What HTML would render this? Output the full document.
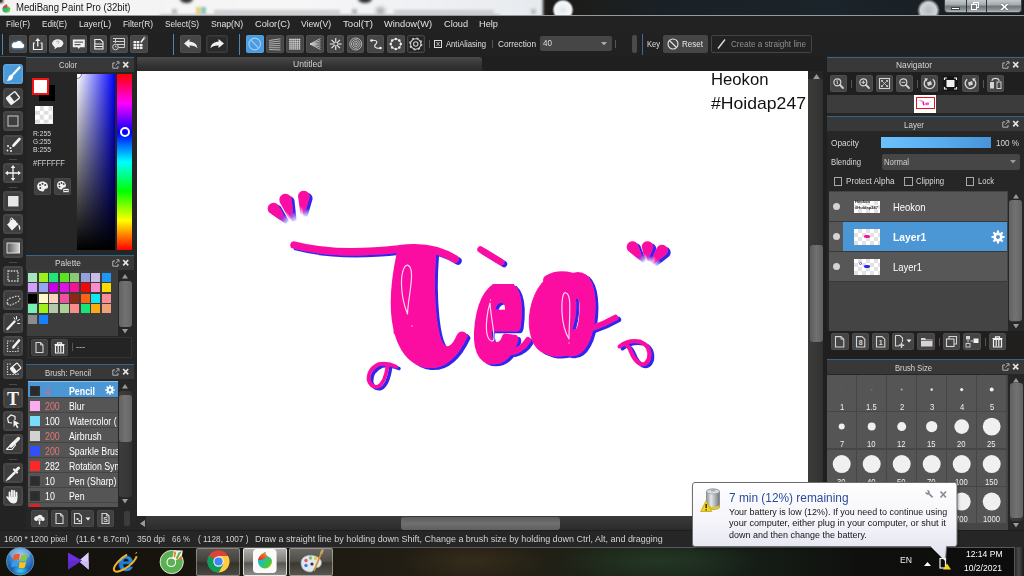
<!DOCTYPE html>
<html lang="en">
<head>
<meta charset="utf-8">
<title>MediBang Paint Pro (32bit)</title>
<style>
html,body{margin:0;padding:0;}
body{width:1024px;height:576px;overflow:hidden;background:#242424;font-family:"Liberation Sans",sans-serif;font-size:9.5px;color:#d8d8d8;position:relative;}
.r{position:absolute;box-sizing:border-box;}
.t{position:absolute;white-space:nowrap;transform-origin:0 0;line-height:1.15;display:block;}
svg{position:absolute;overflow:visible;}
.btn{position:absolute;box-sizing:border-box;background:#464646;border-radius:2px;box-shadow:inset 0 0 0 1px rgba(255,255,255,.05);}
</style>
</head>
<body>
<div class="r" id="titlebar" style="left:0;top:0;width:1024px;height:16px;background:#1a2227;overflow:hidden;">
<div class="r" style="left:540px;top:0px;width:484px;height:16px;background:linear-gradient(90deg,#1e1b19 0,#1d1c1b 8%,#1a2126 25%,#1b242a 60%,#161c21 100%);"></div>
<div class="r" style="left:-5px;top:-3px;width:548px;height:22px;background:linear-gradient(90deg,#f2f2f2 0,#f6f6f6 55%,#eef0f3 80%,#e6eaee 100%);filter:blur(1.500px);"></div>
<div class="r" style="left:552px;top:-1px;width:22px;height:22px;background:radial-gradient(closest-side,#dfe3e6 0,#eef1f3 35%,#f4f6f7 75%,rgba(244,246,247,0) 100%);border-radius:50%;"></div>
<div class="r" style="left:917px;top:-1.5px;width:23px;height:23px;background:radial-gradient(closest-side,#b4babd 0,#c4cacd 40%,#cfd4d7 70%,rgba(190,198,202,0) 100%);border-radius:50%;"></div>
<div class="r" style="left:196px;top:7px;width:5px;height:7px;background:#e6d27a;filter:blur(1.300px);"></div>
<div class="r" style="left:201px;top:7px;width:5px;height:7px;background:#8ec6c0;filter:blur(1.300px);"></div>
<div class="r" style="left:214px;top:9.5px;width:126px;height:4px;background:#c4c4ca;filter:blur(1.600px);opacity:.85;"></div>
<div class="r" style="left:172px;top:9px;width:5px;height:5px;background:#b8b8be;filter:blur(1.500px);"></div>
<div class="r" style="left:352px;top:9px;width:5px;height:5px;background:#b0b0b6;filter:blur(1.500px);"></div>
<div class="r" style="left:376px;top:7px;width:9px;height:8px;background:#a8a8ae;filter:blur(2px);border-radius:50%;"></div>
<div class="r" style="left:394px;top:9.5px;width:100px;height:4px;background:#c4c4ca;filter:blur(1.600px);opacity:.85;"></div>
<div class="r" style="left:531px;top:9px;width:5px;height:5px;background:#b8b8be;filter:blur(1.500px);"></div>
<div class="r" style="left:180px;top:-5px;width:13px;height:8px;background:#2e2e2e;filter:blur(1.500px);border-radius:50%;"></div>
<div class="r" style="left:358px;top:-5px;width:14px;height:8px;background:#2e2e2e;filter:blur(1.500px);border-radius:50%;"></div>
<div class="r" style="left:160px;top:14px;width:340px;height:2px;background:#b0b0b4;filter:blur(.8px);opacity:.7;"></div>
<div class="r" style="left:-2px;top:-2px;width:5px;height:5px;background:#2a2a2a;filter:blur(1px);"></div>
<svg style="left:2px;top:3.500px" width="9" height="9" viewBox="0 0 9 9"><defs><linearGradient id="ai" x1="0" y1="0" x2="1" y2="1"><stop offset="0" stop-color="#18b0c8"/><stop offset=".6" stop-color="#28c060"/><stop offset="1" stop-color="#b8e030"/></linearGradient></defs><path d="M4.800 .300C2.500 1.200 .400 3 .400 5.200a4 3.600 0 0 0 8 0C8.400 3.400 7 2.600 5.600 2C5 1.500 4.800 .900 4.800 .300z" fill="url(#ai)"/><path d="M4.800 .300C2.800 1.200 .800 2.600 .500 4.400C2.200 4.600 4.600 3.800 5.800 2.200C5.100 1.600 4.800 1 4.800 .300z" fill="#e83a48"/><path d="M5.600 2C6.600 2.400 7.600 3 8.100 4C7.200 3.800 6 3.200 5.200 2.800z" fill="#f0d040"/></svg>
<span class="t" style="left:16.4px;top:1.9px;font-size:10px;color:#151515;transform:scaleX(0.954);">MediBang Paint Pro (32bit)</span>
<div class="r" style="left:944px;top:0px;width:78px;height:13px;background:linear-gradient(180deg,#c4c9cc 0,#a4aaad 40%,#6e7578 52%,#8a9194 80%,#b4b9bc 100%);border:1px solid #3a3f41;border-top:none;border-radius:0 0 4px 4px;"></div>
<div class="r" style="left:966px;top:0px;width:1px;height:13px;background:#2e3335;"></div>
<div class="r" style="left:986px;top:0px;width:1px;height:13px;background:#2e3335;"></div>
<div class="r" style="left:951px;top:6.5px;width:9px;height:3px;background:#fff;border:1px solid #444;"></div>
<div class="r" style="left:973px;top:2px;width:6px;height:6px;background:transparent;border:1.5px solid #fff;"></div>
<div class="r" style="left:971px;top:4px;width:6px;height:6px;background:#777;border:1.5px solid #fff;"></div>
<span class="t" style="left:999.5px;top:-0.5px;font-size:11.5px;color:#fff;font-weight:bold;transform:scaleX(1.407);text-shadow:0 0 1px #222;">x</span>
</div>
<div class="r" style="left:0px;top:15px;width:1024px;height:1px;background:#9a9a9a;"></div>
<div class="r" style="left:0px;top:16px;width:1024px;height:17px;background:#222;"></div>
<span class="t" style="left:6px;top:18.9px;font-size:9.5px;color:#e2e2e2;transform:scaleX(0.875);">File(F)</span>
<span class="t" style="left:42px;top:18.9px;font-size:9.5px;color:#e2e2e2;transform:scaleX(0.861);">Edit(E)</span>
<span class="t" style="left:79px;top:18.9px;font-size:9.5px;color:#e2e2e2;transform:scaleX(0.905);">Layer(L)</span>
<span class="t" style="left:123px;top:18.9px;font-size:9.5px;color:#e2e2e2;transform:scaleX(0.875);">Filter(R)</span>
<span class="t" style="left:165px;top:18.9px;font-size:9.5px;color:#e2e2e2;transform:scaleX(0.870);">Select(S)</span>
<span class="t" style="left:211px;top:18.9px;font-size:9.5px;color:#e2e2e2;transform:scaleX(0.905);">Snap(N)</span>
<span class="t" style="left:255px;top:18.9px;font-size:9.5px;color:#e2e2e2;transform:scaleX(0.975);">Color(C)</span>
<span class="t" style="left:301px;top:18.9px;font-size:9.5px;color:#e2e2e2;transform:scaleX(0.907);">View(V)</span>
<span class="t" style="left:343px;top:18.9px;font-size:9.5px;color:#e2e2e2;transform:scaleX(1.015);">Tool(T)</span>
<span class="t" style="left:384px;top:18.9px;font-size:9.5px;color:#e2e2e2;transform:scaleX(0.978);">Window(W)</span>
<span class="t" style="left:444px;top:18.9px;font-size:9.5px;color:#e2e2e2;transform:scaleX(0.967);">Cloud</span>
<span class="t" style="left:479px;top:18.9px;font-size:9.5px;color:#e2e2e2;transform:scaleX(0.972);">Help</span>
<div class="r" style="left:0px;top:33px;width:1024px;height:23px;background:#212121;"></div>
<div class="r" style="left:2px;top:34px;width:1px;height:21px;background:#4a87b5;"></div>
<div class="btn" style="left:9px;top:35px;width:17.5px;height:18px;"></div>
<div class="btn" style="left:29.2px;top:35px;width:17.5px;height:18px;"></div>
<div class="btn" style="left:49.4px;top:35px;width:17.5px;height:18px;"></div>
<div class="btn" style="left:69.6px;top:35px;width:17.5px;height:18px;"></div>
<div class="btn" style="left:89.8px;top:35px;width:17.5px;height:18px;"></div>
<div class="btn" style="left:110px;top:35px;width:17.5px;height:18px;"></div>
<div class="btn" style="left:130.2px;top:35px;width:17.5px;height:18px;"></div>
<div class="r" style="left:173px;top:34px;width:1px;height:21px;background:#4a87b5;"></div>
<div class="btn" style="left:180px;top:35px;width:21px;height:18px;"></div>
<div class="btn" style="left:206px;top:35px;width:22px;height:18px;background:#2a2a2a;border:1px solid #3a3a3a"></div>
<div class="r" style="left:239px;top:34px;width:1px;height:21px;background:#4a87b5;"></div>
<div class="btn" style="left:246px;top:35px;width:17.5px;height:18px;background:#4a9be0;"></div>
<div class="btn" style="left:266.15px;top:35px;width:17.5px;height:18px;background:#464646;"></div>
<div class="btn" style="left:286.3px;top:35px;width:17.5px;height:18px;background:#464646;"></div>
<div class="btn" style="left:306.45px;top:35px;width:17.5px;height:18px;background:#464646;"></div>
<div class="btn" style="left:326.6px;top:35px;width:17.5px;height:18px;background:#464646;"></div>
<div class="btn" style="left:346.75px;top:35px;width:17.5px;height:18px;background:#464646;"></div>
<div class="btn" style="left:366.9px;top:35px;width:17.5px;height:18px;background:#464646;"></div>
<div class="btn" style="left:387.05px;top:35px;width:17.5px;height:18px;background:#464646;"></div>
<div class="btn" style="left:407.2px;top:35px;width:17.5px;height:18px;background:#242424;border:1px solid #444;"></div>
<div class="r" style="left:429px;top:40px;width:1px;height:8px;background:#555;"></div>
<div class="r" style="left:434px;top:40px;width:8px;height:8px;background:transparent;border:1px solid #ddd;"></div>
<span class="t" style="left:436px;top:38.6px;font-size:8px;color:#ddd;transform:scaleX(1.000);">x</span>
<span class="t" style="left:446px;top:38.5px;font-size:9.5px;color:#e0e0e0;transform:scaleX(0.806);">AntiAliasing</span>
<div class="r" style="left:492px;top:40px;width:1px;height:8px;background:#555;"></div>
<span class="t" style="left:498px;top:38.5px;font-size:9.5px;color:#e0e0e0;transform:scaleX(0.867);">Correction</span>
<div class="r" style="left:540px;top:36px;width:72px;height:15px;background:#464646;border-radius:2px;"></div>
<span class="t" style="left:543px;top:39px;font-size:8.5px;color:#ddd;transform:scaleX(0.952);">40</span>
<svg style="left:601px;top:42px" width="6" height="4"><path d="M0 0h6l-3 3.5z" fill="#aaa"/></svg>
<div class="r" style="left:615px;top:40px;width:1px;height:8px;background:#555;"></div>
<div class="r" style="left:632px;top:35px;width:5px;height:18px;background:#4a4a4a;border-radius:2px;"></div>
<div class="r" style="left:642px;top:34px;width:1px;height:21px;background:#3f6f95;"></div>
<span class="t" style="left:647px;top:38.5px;font-size:9.5px;color:#e0e0e0;transform:scaleX(0.794);">Key</span>
<div class="r" style="left:663px;top:35px;width:45px;height:18px;background:#464646;border-radius:2px;"></div>
<svg style="left:667px;top:38px" width="12" height="12" viewBox="0 0 12 12"><circle cx="6" cy="6" r="5" fill="none" stroke="#e8e8e8" stroke-width="1.1"/><path d="M2.5 2.5l7 7" stroke="#e8e8e8" stroke-width="1.1"/></svg>
<span class="t" style="left:682px;top:38.5px;font-size:9.5px;color:#e8e8e8;transform:scaleX(0.846);">Reset</span>
<div class="r" style="left:711px;top:35px;width:101px;height:18px;background:#222;border:1px solid #444;border-radius:2px;"></div>
<svg style="left:717px;top:38px" width="10" height="12" viewBox="0 0 10 12"><path d="M1 10.5L8 1.5" stroke="#ddd" stroke-width="1.4"/></svg>
<span class="t" style="left:731px;top:38.5px;font-size:9.5px;color:#8e8e8e;transform:scaleX(0.856);">Create a straight line</span>
<div class="r" style="left:0px;top:56px;width:26px;height:474px;background:#232323;"></div>
<div class="r" style="left:0px;top:56px;width:26px;height:1px;background:#2d4a60;"></div>
<div class="r" style="left:9px;top:159px;width:8px;height:1px;background:#4a4a4a;"></div>
<div class="r" style="left:9px;top:187px;width:8px;height:1px;background:#4a4a4a;"></div>
<div class="r" style="left:9px;top:262px;width:8px;height:1px;background:#4a4a4a;"></div>
<div class="r" style="left:9px;top:384px;width:8px;height:1px;background:#4a4a4a;"></div>
<div class="r" style="left:9px;top:459px;width:8px;height:1px;background:#4a4a4a;"></div>
<div class="btn" id="tool-brush" style="left:3px;top:64px;width:20px;height:20px;background:#4a9ad9;border-radius:2.5px;border:1px solid #5aa6e2;"></div>
<div class="btn" id="tool-eraser" style="left:3px;top:88px;width:20px;height:20px;background:#3e3e3e;border-radius:2.5px;border:1px solid #484848;"></div>
<div class="btn" id="tool-rect" style="left:3px;top:111px;width:20px;height:20px;background:#3e3e3e;border-radius:2.5px;border:1px solid #484848;"></div>
<div class="btn" id="tool-dotpen" style="left:3px;top:135px;width:20px;height:20px;background:#3e3e3e;border-radius:2.5px;border:1px solid #484848;"></div>
<div class="btn" id="tool-move" style="left:3px;top:163px;width:20px;height:20px;background:#3e3e3e;border-radius:2.5px;border:1px solid #484848;"></div>
<div class="btn" id="tool-fill" style="left:3px;top:191px;width:20px;height:20px;background:#3e3e3e;border-radius:2.5px;border:1px solid #484848;"></div>
<div class="btn" id="tool-bucket" style="left:3px;top:214px;width:20px;height:20px;background:#3e3e3e;border-radius:2.5px;border:1px solid #484848;"></div>
<div class="btn" id="tool-grad" style="left:3px;top:238px;width:20px;height:20px;background:#3e3e3e;border-radius:2.5px;border:1px solid #484848;"></div>
<div class="btn" id="tool-select" style="left:3px;top:266px;width:20px;height:20px;background:#3e3e3e;border-radius:2.5px;border:1px solid #484848;"></div>
<div class="btn" id="tool-lasso" style="left:3px;top:290px;width:20px;height:20px;background:#3e3e3e;border-radius:2.5px;border:1px solid #484848;"></div>
<div class="btn" id="tool-wand" style="left:3px;top:313px;width:20px;height:20px;background:#3e3e3e;border-radius:2.5px;border:1px solid #484848;"></div>
<div class="btn" id="tool-selpen" style="left:3px;top:336px;width:20px;height:20px;background:#3e3e3e;border-radius:2.5px;border:1px solid #484848;"></div>
<div class="btn" id="tool-selerase" style="left:3px;top:359px;width:20px;height:20px;background:#3e3e3e;border-radius:2.5px;border:1px solid #484848;"></div>
<div class="btn" id="tool-text" style="left:3px;top:388px;width:20px;height:20px;background:#3e3e3e;border-radius:2.5px;border:1px solid #484848;"></div>
<div class="btn" id="tool-op" style="left:3px;top:411px;width:20px;height:20px;background:#3e3e3e;border-radius:2.5px;border:1px solid #484848;"></div>
<div class="btn" id="tool-knife" style="left:3px;top:434px;width:20px;height:20px;background:#3e3e3e;border-radius:2.5px;border:1px solid #484848;"></div>
<div class="btn" id="tool-eyedrop" style="left:3px;top:463px;width:20px;height:20px;background:#3e3e3e;border-radius:2.5px;border:1px solid #484848;"></div>
<div class="btn" id="tool-hand" style="left:3px;top:486px;width:20px;height:20px;background:#3e3e3e;border-radius:2.5px;border:1px solid #484848;"></div>
<div class="r" style="left:26px;top:56px;width:110px;height:200px;background:#262626;"></div>
<div class="r" style="left:26px;top:56.5px;width:108px;height:15px;background:#383838;border-top:1px solid #36658c;"></div>
<span class="t" style="left:59px;top:60.1px;font-size:9.5px;color:#d6d6d6;transform:scaleX(0.793);">Color</span>
<svg style="left:111px;top:59.5px" width="18" height="9" viewBox="0 0 18 9"><path d="M4 3H1.800v5.200h5.200V6" fill="none" stroke="#b4b4b4" stroke-width="1"/><path d="M4.500 5.500L7.500 2.200M5.500 1.700h2.500v2.500" fill="none" stroke="#b4b4b4" stroke-width=".9"/><path d="M12.2 2l5 5.4M17.2 2l-5 5.4" stroke="#e4e4e4" stroke-width="1.7"/></svg>
<div class="r" style="left:39px;top:85px;width:16px;height:15.5px;background:#000;"></div>
<div class="r" style="left:32px;top:78px;width:16.5px;height:16.5px;background:#fff;border:2px solid #f01414;"></div>
<div class="r" style="left:35px;top:106px;width:17.5px;height:17.5px;background:#fff;background-image:conic-gradient(#dedede 25%,#fff 0 50%,#dedede 0 75%,#fff 0);background-size:8.75px 8.75px;"></div>
<span class="t" style="left:32.5px;top:128.7px;font-size:8px;color:#d8d8d8;transform:scaleX(0.843);">R:255</span>
<span class="t" style="left:32.5px;top:137.2px;font-size:8px;color:#d8d8d8;transform:scaleX(0.826);">G:255</span>
<span class="t" style="left:32.5px;top:145.4px;font-size:8px;color:#d8d8d8;transform:scaleX(0.861);">B:255</span>
<span class="t" style="left:32.5px;top:159.3px;font-size:8.5px;color:#d0d0d0;transform:scaleX(0.892);">#FFFFFF</span>
<div class="btn" style="left:34px;top:178px;width:17px;height:17px;background:#404040"></div>
<div class="btn" style="left:54px;top:178px;width:17px;height:17px;background:#404040"></div>
<div class="r" style="left:77px;top:73.500px;width:37.500px;height:176.500px;overflow:hidden;background:linear-gradient(180deg,rgba(0,0,0,0),#000),linear-gradient(90deg,#fff,#0000ff);"><div class="r" style="left:-5px;top:-5px;width:10px;height:10px;border-radius:50%;background:#fff;border:1px solid #777;"></div></div>
<div class="r" style="left:117px;top:73.5px;width:15px;height:176.5px;background:#f00;background:linear-gradient(180deg,#ff0000 0,#ff00ff 16.6%,#0000ff 33.3%,#00ffff 50%,#00ff00 66.6%,#ffff00 83.3%,#ff0000 100%);"></div>
<div class="r" style="left:119.5px;top:127px;width:10px;height:10px;background:transparent;border:2px solid #fff;border-radius:50%;"></div>
<div class="r" style="left:26px;top:254px;width:110px;height:110px;background:#262626;"></div>
<div class="r" style="left:26px;top:254.5px;width:108px;height:15px;background:#383838;border-top:1px solid #36658c;"></div>
<span class="t" style="left:55px;top:258.1px;font-size:9.5px;color:#d6d6d6;transform:scaleX(0.879);">Palette</span>
<svg style="left:111px;top:257.5px" width="18" height="9" viewBox="0 0 18 9"><path d="M4 3H1.800v5.200h5.200V6" fill="none" stroke="#b4b4b4" stroke-width="1"/><path d="M4.500 5.500L7.500 2.200M5.500 1.700h2.500v2.500" fill="none" stroke="#b4b4b4" stroke-width=".9"/><path d="M12.2 2l5 5.4M17.2 2l-5 5.4" stroke="#e4e4e4" stroke-width="1.7"/></svg>
<div class="r" style="left:27px;top:270px;width:91px;height:66px;background:#3d3d3d;"></div>
<div class="r" style="left:28.2px;top:272.8px;width:9.2px;height:9.2px;background:#a8e6c0;"></div>
<div class="r" style="left:38.7px;top:272.8px;width:9.2px;height:9.2px;background:#9cf01e;"></div>
<div class="r" style="left:49.2px;top:272.8px;width:9.2px;height:9.2px;background:#1ee678;"></div>
<div class="r" style="left:59.7px;top:272.8px;width:9.2px;height:9.2px;background:#5ae61e;"></div>
<div class="r" style="left:70.2px;top:272.8px;width:9.2px;height:9.2px;background:#8cc878;"></div>
<div class="r" style="left:80.7px;top:272.8px;width:9.2px;height:9.2px;background:#96a0dc;"></div>
<div class="r" style="left:91.2px;top:272.8px;width:9.2px;height:9.2px;background:#c8bee6;"></div>
<div class="r" style="left:101.7px;top:272.8px;width:9.2px;height:9.2px;background:#1e96fa;"></div>
<div class="r" style="left:28.2px;top:283.3px;width:9.2px;height:9.2px;background:#d2a0fa;"></div>
<div class="r" style="left:38.7px;top:283.3px;width:9.2px;height:9.2px;background:#96a5f0;"></div>
<div class="r" style="left:49.2px;top:283.3px;width:9.2px;height:9.2px;background:#c800e6;"></div>
<div class="r" style="left:59.7px;top:283.3px;width:9.2px;height:9.2px;background:#dc14e6;"></div>
<div class="r" style="left:70.2px;top:283.3px;width:9.2px;height:9.2px;background:#f01496;"></div>
<div class="r" style="left:80.7px;top:283.3px;width:9.2px;height:9.2px;background:#f00a0a;"></div>
<div class="r" style="left:91.2px;top:283.3px;width:9.2px;height:9.2px;background:#fa8cc8;"></div>
<div class="r" style="left:101.7px;top:283.3px;width:9.2px;height:9.2px;background:#fadc00;"></div>
<div class="r" style="left:28.2px;top:293.8px;width:9.2px;height:9.2px;background:#000000;"></div>
<div class="r" style="left:38.7px;top:293.8px;width:9.2px;height:9.2px;background:#fffac8;"></div>
<div class="r" style="left:49.2px;top:293.8px;width:9.2px;height:9.2px;background:#fad2be;"></div>
<div class="r" style="left:59.7px;top:293.8px;width:9.2px;height:9.2px;background:#f050a0;"></div>
<div class="r" style="left:70.2px;top:293.8px;width:9.2px;height:9.2px;background:#8c2814;"></div>
<div class="r" style="left:80.7px;top:293.8px;width:9.2px;height:9.2px;background:#fa6414;"></div>
<div class="r" style="left:91.2px;top:293.8px;width:9.2px;height:9.2px;background:#14e6f0;"></div>
<div class="r" style="left:101.7px;top:293.8px;width:9.2px;height:9.2px;background:#fa8c96;"></div>
<div class="r" style="left:28.2px;top:304.3px;width:9.2px;height:9.2px;background:#78f0b4;"></div>
<div class="r" style="left:38.7px;top:304.3px;width:9.2px;height:9.2px;background:#a0f01e;"></div>
<div class="r" style="left:49.2px;top:304.3px;width:9.2px;height:9.2px;background:#b4c8aa;"></div>
<div class="r" style="left:59.7px;top:304.3px;width:9.2px;height:9.2px;background:#aad296;"></div>
<div class="r" style="left:70.2px;top:304.3px;width:9.2px;height:9.2px;background:#fa8c8c;"></div>
<div class="r" style="left:80.7px;top:304.3px;width:9.2px;height:9.2px;background:#14e678;"></div>
<div class="r" style="left:91.2px;top:304.3px;width:9.2px;height:9.2px;background:#faaa14;"></div>
<div class="r" style="left:101.7px;top:304.3px;width:9.2px;height:9.2px;background:#f0a078;"></div>
<div class="r" style="left:28.2px;top:314.8px;width:9.2px;height:9.2px;background:#8c8c8c;"></div>
<div class="r" style="left:38.7px;top:314.8px;width:9.2px;height:9.2px;background:#1482fa;"></div>
<div class="r" style="left:118px;top:271px;width:14px;height:65px;background:#262626;"></div>
<div class="r" style="left:118.5px;top:280.5px;width:13px;height:46px;background:linear-gradient(90deg,#3c3c3c,#383838 60%,#323232);border-radius:3px;"></div>
<div class="r" style="left:118.5px;top:281px;width:13px;height:46px;background:linear-gradient(90deg,#626262,#727272 50%,#636363);border-radius:3px;"></div>
<svg style="left:122px;top:274px" width="6" height="5"><path d="M3 0l3 4.500h-6z" fill="#9a9a9a"/></svg>
<svg style="left:122px;top:328.5px" width="6" height="5"><path d="M0 0h6l-3 4.500z" fill="#9a9a9a"/></svg>
<div class="r" style="left:28px;top:337px;width:104px;height:21px;background:#242424;border:1px solid #333;"></div>
<div class="btn" style="left:31px;top:339px;width:17px;height:17px;background:#404040"></div>
<div class="btn" style="left:51px;top:339px;width:17px;height:17px;background:#404040"></div>
<div class="r" style="left:72px;top:343px;width:1px;height:8px;background:#555;"></div>
<span class="t" style="left:76px;top:342px;font-size:9px;color:#ccc;transform:scaleX(1.001);">---</span>
<div class="r" style="left:26px;top:363px;width:110px;height:167px;background:#262626;"></div>
<div class="r" style="left:26px;top:364px;width:108px;height:15px;background:#383838;border-top:1px solid #36658c;"></div>
<span class="t" style="left:45px;top:367.6px;font-size:9.5px;color:#d6d6d6;transform:scaleX(0.822);">Brush: Pencil</span>
<svg style="left:111px;top:367px" width="18" height="9" viewBox="0 0 18 9"><path d="M4 3H1.800v5.200h5.200V6" fill="none" stroke="#b4b4b4" stroke-width="1"/><path d="M4.500 5.500L7.500 2.200M5.500 1.700h2.500v2.500" fill="none" stroke="#b4b4b4" stroke-width=".9"/><path d="M12.2 2l5 5.4M17.2 2l-5 5.4" stroke="#e4e4e4" stroke-width="1.7"/></svg>
<div class="r" style="left:28px;top:381px;width:89.5px;height:125.6px;background:#555;overflow:hidden;"></div>
<div class="r" style="left:28px;top:381px;width:89.5px;height:125.600px;overflow:hidden;">
<div class="r" style="left:0px;top:0px;width:90px;height:17px;background:#4b96d4;border-bottom:1px solid #444;border-top:1px solid #8cc0ea;"></div>
<div class="r" style="left:2px;top:4.75px;width:10px;height:10px;background:#2a2a2a;border:1px solid #333;"></div>
<span class="t" style="left:16.5px;top:4.55px;font-size:10px;color:#e8657a;transform:scaleX(0.880);">4</span>
<span class="t" style="left:40.5px;top:4.55px;font-size:10px;color:#fff;font-weight:bold;transform:scaleX(0.880);">Pencil</span>
<div class="r" style="left:0px;top:17px;width:90px;height:15px;background:#555;border-bottom:1px solid #444;"></div>
<div class="r" style="left:2px;top:19.75px;width:10px;height:10px;background:#ffaaee;"></div>
<span class="t" style="left:16.5px;top:19.55px;font-size:10px;color:#e07878;transform:scaleX(0.880);">200</span>
<span class="t" style="left:40.5px;top:19.55px;font-size:10px;color:#fff;transform:scaleX(0.880);">Blur</span>
<div class="r" style="left:0px;top:32px;width:90px;height:15px;background:#555;border-bottom:1px solid #444;"></div>
<div class="r" style="left:2px;top:34.75px;width:10px;height:10px;background:#78dcfa;"></div>
<span class="t" style="left:16.5px;top:34.55px;font-size:10px;color:#fff;transform:scaleX(0.880);">100</span>
<span class="t" style="left:40.5px;top:34.55px;font-size:10px;color:#fff;transform:scaleX(0.880);">Watercolor (</span>
<div class="r" style="left:0px;top:47px;width:90px;height:15px;background:#555;border-bottom:1px solid #444;"></div>
<div class="r" style="left:2px;top:49.75px;width:10px;height:10px;background:#d2d2d2;"></div>
<span class="t" style="left:16.5px;top:49.55px;font-size:10px;color:#e07878;transform:scaleX(0.880);">200</span>
<span class="t" style="left:40.5px;top:49.55px;font-size:10px;color:#fff;transform:scaleX(0.880);">Airbrush</span>
<div class="r" style="left:0px;top:62px;width:90px;height:15px;background:#555;border-bottom:1px solid #444;"></div>
<div class="r" style="left:2px;top:64.75px;width:10px;height:10px;background:#3250fa;"></div>
<span class="t" style="left:16.5px;top:64.55px;font-size:10px;color:#e07878;transform:scaleX(0.880);">200</span>
<span class="t" style="left:40.5px;top:64.55px;font-size:10px;color:#fff;transform:scaleX(0.880);">Sparkle Brush</span>
<div class="r" style="left:0px;top:77px;width:90px;height:15px;background:#555;border-bottom:1px solid #444;"></div>
<div class="r" style="left:2px;top:79.75px;width:10px;height:10px;background:#fa2828;"></div>
<span class="t" style="left:16.5px;top:79.55px;font-size:10px;color:#fff;transform:scaleX(0.880);">282</span>
<span class="t" style="left:40.5px;top:79.55px;font-size:10px;color:#fff;transform:scaleX(0.880);">Rotation Symmetry</span>
<div class="r" style="left:0px;top:92px;width:90px;height:15px;background:#555;border-bottom:1px solid #444;"></div>
<div class="r" style="left:2px;top:94.75px;width:10px;height:10px;background:#2d2d2d;border:1px solid #333;"></div>
<span class="t" style="left:16.5px;top:94.55px;font-size:10px;color:#fff;transform:scaleX(0.880);">10</span>
<span class="t" style="left:40.5px;top:94.55px;font-size:10px;color:#fff;transform:scaleX(0.880);">Pen (Sharp)</span>
<div class="r" style="left:0px;top:107px;width:90px;height:15px;background:#555;border-bottom:1px solid #444;"></div>
<div class="r" style="left:2px;top:109.75px;width:10px;height:10px;background:#2d2d2d;border:1px solid #333;"></div>
<span class="t" style="left:16.5px;top:109.55px;font-size:10px;color:#fff;transform:scaleX(0.880);">10</span>
<span class="t" style="left:40.5px;top:109.55px;font-size:10px;color:#fff;transform:scaleX(0.880);">Pen</span>
<div class="r" style="left:0px;top:122px;width:90px;height:15px;background:#555;border-bottom:1px solid #444;"></div>
<div class="r" style="left:2px;top:122.8px;width:10px;height:10px;background:#e02020;"></div>
</div>
<svg style="left:104.5px;top:385px" width="10" height="10" viewBox="0 0 10 10"><path d="M8.31 4.21L9.74 4.25L9.74 5.75L8.31 5.79L7.90 6.78L8.88 7.82L7.82 8.88L6.78 7.90L5.79 8.31L5.75 9.74L4.25 9.74L4.21 8.31L3.22 7.90L2.18 8.88L1.12 7.82L2.10 6.78L1.69 5.79L0.26 5.75L0.26 4.25L1.69 4.21L2.10 3.22L1.12 2.18L2.18 1.12L3.22 2.10L4.21 1.69L4.25 0.26L5.75 0.26L5.79 1.69L6.78 2.10L7.82 1.12L8.88 2.18L7.90 3.22zM3.60 5.00a1.40 1.40 0 1 0 2.80 0a1.40 1.40 0 1 0 -2.80 0z" fill="#fff" fill-rule="evenodd"/></svg>
<div class="r" style="left:118px;top:381px;width:14px;height:125px;background:#262626;"></div>
<div class="r" style="left:118.5px;top:390.5px;width:13px;height:106px;background:linear-gradient(90deg,#3c3c3c,#383838 60%,#323232);border-radius:3px;"></div>
<div class="r" style="left:118.5px;top:395px;width:13px;height:47px;background:linear-gradient(90deg,#626262,#727272 50%,#636363);border-radius:3px;"></div>
<svg style="left:122px;top:384px" width="6" height="5"><path d="M3 0l3 4.500h-6z" fill="#9a9a9a"/></svg>
<svg style="left:122px;top:498.5px" width="6" height="5"><path d="M0 0h6l-3 4.500z" fill="#9a9a9a"/></svg>
<div class="btn" style="left:31px;top:509.5px;width:17px;height:17px;background:#404040"></div>
<div class="btn" style="left:51px;top:509.5px;width:17px;height:17px;background:#404040"></div>
<div class="btn" style="left:71px;top:509.5px;width:23px;height:17px;background:#404040"></div>
<div class="btn" style="left:97px;top:509.5px;width:17px;height:17px;background:#404040"></div>
<div class="r" style="left:124px;top:511px;width:6px;height:15px;background:#3c3c3c;border-radius:2px;"></div>
<div class="r" style="left:136px;top:56px;width:691px;height:15px;background:#1f1f1f;"></div>
<div class="r" style="left:137px;top:56.5px;width:345px;height:14px;background:linear-gradient(180deg,#4a4a4a 0,#333 60%,#2a2a2a 100%);border-radius:0 3px 0 0;"></div>
<span class="t" style="left:293px;top:59px;font-size:9.5px;color:#d0d0d0;transform:scaleX(0.900);">Untitled</span>
<div class="r" style="left:137px;top:71px;width:671px;height:444.5px;background:#fff;"></div>
<span class="t" style="left:710.5px;top:70.2px;font-size:17px;color:#111;transform:scaleX(0.981);">Heokon</span>
<span class="t" style="left:711px;top:94.2px;font-size:17px;color:#111;transform:scaleX(1.036);">#Hoidap247</span>
<div class="r" style="left:808px;top:71px;width:15.5px;height:445px;background:linear-gradient(90deg,#3b3b3a,#363635 60%,#2f2f2f);"></div>
<div class="r" style="left:808px;top:71px;width:15.5px;height:8px;background:#252525;"></div>
<svg style="left:812.5px;top:73.5px" width="7" height="5"><path d="M3.5 0l3.5 5h-7z" fill="#9a9a9a"/></svg>
<div class="r" style="left:809.5px;top:245px;width:13px;height:97px;background:linear-gradient(90deg,#5c5c5c,#707070 50%,#5f5f5f);border-radius:3px;"></div>
<div class="r" style="left:823px;top:56px;width:4px;height:474px;background:#1f1f1f;"></div>
<div class="r" style="left:137px;top:515.5px;width:686px;height:14.5px;background:linear-gradient(180deg,#3a3a3a,#333 50%,#2b2b2b);"></div>
<div class="r" style="left:137px;top:515.5px;width:8.5px;height:14.5px;background:#262626;"></div>
<svg style="left:139.5px;top:519.5px" width="5" height="7"><path d="M0 3.5l5-3.5v7z" fill="#9a9a9a"/></svg>
<div class="r" style="left:401px;top:516.5px;width:159px;height:13px;background:linear-gradient(180deg,#5c5c5c,#707070 50%,#5f5f5f);border-radius:3px;"></div>
<div class="r" style="left:809px;top:516px;width:18px;height:14px;background:#232323;"></div>
<div class="r" style="left:827px;top:56px;width:197px;height:474px;background:#262626;"></div>
<div class="r" style="left:827px;top:56.5px;width:197px;height:15px;background:#383838;border-top:1px solid #36658c;"></div>
<span class="t" style="left:895.5px;top:60.1px;font-size:9.5px;color:#d6d6d6;transform:scaleX(0.885);">Navigator</span>
<svg style="left:1001px;top:59.5px" width="18" height="9" viewBox="0 0 18 9"><path d="M4 3H1.800v5.200h5.200V6" fill="none" stroke="#b4b4b4" stroke-width="1"/><path d="M4.500 5.500L7.500 2.200M5.500 1.700h2.500v2.500" fill="none" stroke="#b4b4b4" stroke-width=".9"/><path d="M12.2 2l5 5.4M17.2 2l-5 5.4" stroke="#e4e4e4" stroke-width="1.7"/></svg>
<div class="r" style="left:827px;top:72px;width:197px;height:23px;background:#1f1f1f;"></div>
<div class="btn" id="nav0" style="left:830px;top:75px;width:17px;height:17px;background:#454545"></div>
<div class="btn" id="nav1" style="left:855.5px;top:75px;width:17px;height:17px;background:#454545"></div>
<div class="btn" id="nav2" style="left:876px;top:75px;width:17px;height:17px;background:#454545"></div>
<div class="btn" id="nav3" style="left:896px;top:75px;width:17px;height:17px;background:#454545"></div>
<div class="btn" id="nav4" style="left:921px;top:75px;width:17px;height:17px;background:#454545"></div>
<div class="btn" id="nav5" style="left:942px;top:75px;width:17px;height:17px;background:#141414"></div>
<div class="btn" id="nav6" style="left:962px;top:75px;width:17px;height:17px;background:#454545"></div>
<div class="btn" id="nav7" style="left:987px;top:75px;width:17px;height:17px;background:#454545"></div>
<div class="r" style="left:851px;top:80px;width:1px;height:8px;background:#555;"></div>
<div class="r" style="left:917px;top:80px;width:1px;height:8px;background:#555;"></div>
<div class="r" style="left:983px;top:80px;width:1px;height:8px;background:#555;"></div>
<div class="r" style="left:827px;top:94.5px;width:197px;height:18.5px;background:#3c3c3c;"></div>
<div class="r" style="left:914px;top:95px;width:22.2px;height:17.6px;background:#fff;"></div>
<div class="r" style="left:915.5px;top:97px;width:19px;height:12px;background:#fff;border:1.500px solid #e0141e;"></div>
<div class="r" style="left:827px;top:116px;width:197px;height:15px;background:#383838;border-top:1px solid #36658c;"></div>
<span class="t" style="left:903.5px;top:119.6px;font-size:9.5px;color:#d6d6d6;transform:scaleX(0.842);">Layer</span>
<svg style="left:1001px;top:119px" width="18" height="9" viewBox="0 0 18 9"><path d="M4 3H1.800v5.200h5.200V6" fill="none" stroke="#b4b4b4" stroke-width="1"/><path d="M4.500 5.500L7.500 2.200M5.500 1.700h2.500v2.500" fill="none" stroke="#b4b4b4" stroke-width=".9"/><path d="M12.2 2l5 5.4M17.2 2l-5 5.4" stroke="#e4e4e4" stroke-width="1.7"/></svg>
<span class="t" style="left:830.5px;top:138px;font-size:9.5px;color:#d8d8d8;transform:scaleX(0.869);">Opacity</span>
<div class="r" style="left:880.5px;top:137px;width:110px;height:11px;background:linear-gradient(90deg,#6cc0fb 0,#5aaef0 50%,#4794d8 100%);"></div>
<span class="t" style="left:996px;top:138px;font-size:9.5px;color:#d8d8d8;transform:scaleX(0.854);">100 %</span>
<span class="t" style="left:830.5px;top:157px;font-size:9.5px;color:#d8d8d8;transform:scaleX(0.811);">Blending</span>
<div class="r" style="left:881.5px;top:154px;width:138px;height:15.5px;background:#464646;border-radius:2px;"></div>
<span class="t" style="left:884px;top:157.3px;font-size:9.5px;color:#d0d0d0;transform:scaleX(0.817);">Normal</span>
<svg style="left:1009.5px;top:159.5px" width="6" height="4"><path d="M0 0h6l-3 3.5z" fill="#9a9a9a"/></svg>
<div class="r" style="left:833.5px;top:177px;width:8.5px;height:8.5px;background:transparent;border:1px solid #a8a8a8;"></div>
<div class="r" style="left:904px;top:177px;width:8.5px;height:8.5px;background:transparent;border:1px solid #a8a8a8;"></div>
<div class="r" style="left:965.5px;top:177px;width:8.5px;height:8.5px;background:transparent;border:1px solid #a8a8a8;"></div>
<span class="t" style="left:845.5px;top:176px;font-size:9.5px;color:#d8d8d8;transform:scaleX(0.858);">Protect Alpha</span>
<span class="t" style="left:916px;top:176px;font-size:9.5px;color:#d8d8d8;transform:scaleX(0.816);">Clipping</span>
<span class="t" style="left:977.5px;top:176px;font-size:9.5px;color:#d8d8d8;transform:scaleX(0.797);">Lock</span>
<div class="r" style="left:829px;top:191px;width:179px;height:140px;background:#444;"></div>
<div class="r" style="left:829px;top:192px;width:178px;height:30px;background:#383838;"></div>
<div class="r" style="left:829px;top:192px;width:178px;height:29px;background:#575757;"></div>
<div class="r" style="left:832.5px;top:203px;width:7px;height:7px;background:#d4d4d4;border-radius:50%;"></div>
<span class="t" style="left:892.5px;top:200.5px;font-size:10.5px;color:#fff;transform:scaleX(0.900);">Heokon</span>
<div class="r" style="left:829px;top:222px;width:178px;height:30px;background:#383838;"></div>
<div class="r" style="left:829px;top:222px;width:178px;height:29px;background:#575757;"></div>
<div class="r" style="left:843px;top:222px;width:164px;height:29px;background:#4b96d4;"></div>
<div class="r" style="left:832.5px;top:233px;width:7px;height:7px;background:#d4d4d4;border-radius:50%;"></div>
<span class="t" style="left:892.5px;top:230.5px;font-size:10.5px;color:#fff;font-weight:bold;transform:scaleX(0.980);">Layer1</span>
<div class="r" style="left:829px;top:252px;width:178px;height:30px;background:#383838;"></div>
<div class="r" style="left:829px;top:252px;width:178px;height:29px;background:#575757;"></div>
<div class="r" style="left:832.5px;top:263px;width:7px;height:7px;background:#d4d4d4;border-radius:50%;"></div>
<span class="t" style="left:892.5px;top:260.5px;font-size:10.5px;color:#fff;transform:scaleX(0.900);">Layer1</span>
<div class="r" style="left:854px;top:200.5px;width:26px;height:12px;background:#fff;background-color:#fff;background-image:conic-gradient(#e2e2e2 25%,#fff 0 50%,#e2e2e2 0 75%,#fff 0);background-size:8px 8px;"></div>
<span class="t" style="left:855px;top:200px;font-size:4px;color:#222;font-weight:bold;transform:scaleX(1.023);">Heokon</span>
<span class="t" style="left:855px;top:205.5px;font-size:4px;color:#222;font-weight:bold;transform:scaleX(1.024);">#Hoidap247</span>
<div class="r" style="left:854px;top:229px;width:26px;height:15.5px;background:#fff;background-color:#fff;background-image:conic-gradient(#e2e2e2 25%,#fff 0 50%,#e2e2e2 0 75%,#fff 0);background-size:8px 8px;"></div>
<div class="r" style="left:864px;top:235px;width:6px;height:3px;background:#f0149c;border-radius:40%;"></div>
<div class="r" style="left:854px;top:259px;width:26px;height:15.5px;background:#fff;background-color:#fff;background-image:conic-gradient(#e2e2e2 25%,#fff 0 50%,#e2e2e2 0 75%,#fff 0);background-size:8px 8px;"></div>
<div class="r" style="left:864px;top:265px;width:6px;height:3px;background:#2828e8;border-radius:40%;"></div>
<div class="r" style="left:859px;top:262px;width:3px;height:3px;background:transparent;border:0.7px solid #5050e8;border-radius:50%;"></div>
<svg style="left:990.5px;top:229.5px" width="14" height="14" viewBox="0 0 14 14"><path d="M11.57 5.90L13.52 5.97L13.52 8.03L11.57 8.10L11.01 9.46L12.34 10.88L10.88 12.34L9.46 11.01L8.10 11.57L8.03 13.52L5.97 13.52L5.90 11.57L4.54 11.01L3.12 12.34L1.66 10.88L2.99 9.46L2.43 8.10L0.48 8.03L0.48 5.97L2.43 5.90L2.99 4.54L1.66 3.12L3.12 1.66L4.54 2.99L5.90 2.43L5.97 0.48L8.03 0.48L8.10 2.43L9.46 2.99L10.88 1.66L12.34 3.12L11.01 4.54zM5.00 7.00a2.00 2.00 0 1 0 4.00 0a2.00 2.00 0 1 0 -4.00 0z" fill="#fff" fill-rule="evenodd"/></svg>
<div class="r" style="left:1008.5px;top:191px;width:14px;height:140px;background:#262626;"></div>
<div class="r" style="left:1009px;top:200.5px;width:13px;height:121px;background:linear-gradient(90deg,#3c3c3c,#383838 60%,#323232);border-radius:3px;"></div>
<div class="r" style="left:1009px;top:200px;width:13px;height:121px;background:linear-gradient(90deg,#626262,#727272 50%,#636363);border-radius:3px;"></div>
<svg style="left:1012.5px;top:194px" width="6" height="5"><path d="M3 0l3 4.500h-6z" fill="#9a9a9a"/></svg>
<svg style="left:1012.5px;top:323.5px" width="6" height="5"><path d="M0 0h6l-3 4.500z" fill="#9a9a9a"/></svg>
<div class="r" style="left:827px;top:331px;width:197px;height:28px;background:#211f1e;"></div>
<div class="btn" id="lb0" style="left:831px;top:333px;width:17.5px;height:17px;background:#454545"></div>
<div class="btn" id="lb1" style="left:852px;top:333px;width:17px;height:17px;background:#454545"></div>
<div class="btn" id="lb2" style="left:872px;top:333px;width:17px;height:17px;background:#454545"></div>
<div class="btn" id="lb3" style="left:892px;top:333px;width:22px;height:17px;background:#454545"></div>
<div class="btn" id="lb4" style="left:917px;top:333px;width:18px;height:17px;background:#454545"></div>
<div class="btn" id="lb5" style="left:943px;top:333px;width:17px;height:17px;background:#454545"></div>
<div class="btn" id="lb6" style="left:963px;top:333px;width:18px;height:17px;background:#454545"></div>
<div class="btn" id="lb7" style="left:989px;top:333px;width:17px;height:17px;background:#454545"></div>
<div class="r" style="left:939px;top:338px;width:1px;height:8px;background:#555;"></div>
<div class="r" style="left:984.5px;top:338px;width:1px;height:8px;background:#555;"></div>
<div class="r" style="left:827px;top:359px;width:197px;height:15px;background:#383838;border-top:1px solid #36658c;"></div>
<span class="t" style="left:895px;top:362.6px;font-size:9.5px;color:#d6d6d6;transform:scaleX(0.805);">Brush Size</span>
<svg style="left:1001px;top:362px" width="18" height="9" viewBox="0 0 18 9"><path d="M4 3H1.800v5.200h5.200V6" fill="none" stroke="#b4b4b4" stroke-width="1"/><path d="M4.500 5.500L7.500 2.200M5.500 1.700h2.500v2.500" fill="none" stroke="#b4b4b4" stroke-width=".9"/><path d="M12.2 2l5 5.4M17.2 2l-5 5.4" stroke="#e4e4e4" stroke-width="1.7"/></svg>
<div class="r" style="left:827px;top:374.5px;width:181px;height:156px;background:#464646;"></div>
<div class="r" style="left:827px;top:375px;width:29px;height:36px;background:#555;"></div>
<span class="t" style="left:839.573px;top:403.2px;font-size:8.5px;color:#f0f0f0;transform:scaleX(0.900);">1</span>
<div class="r" style="left:857px;top:375px;width:29px;height:36px;background:#555;"></div>
<span class="t" style="left:866.383px;top:403.2px;font-size:8.5px;color:#f0f0f0;transform:scaleX(0.900);">1.5</span>
<div class="r" style="left:887px;top:375px;width:29px;height:36px;background:#555;"></div>
<span class="t" style="left:899.573px;top:403.2px;font-size:8.5px;color:#f0f0f0;transform:scaleX(0.900);">2</span>
<div class="r" style="left:917px;top:375px;width:29px;height:36px;background:#555;"></div>
<span class="t" style="left:929.573px;top:403.2px;font-size:8.5px;color:#f0f0f0;transform:scaleX(0.900);">3</span>
<div class="r" style="left:947px;top:375px;width:29px;height:36px;background:#555;"></div>
<span class="t" style="left:959.573px;top:403.2px;font-size:8.5px;color:#f0f0f0;transform:scaleX(0.900);">4</span>
<div class="r" style="left:977px;top:375px;width:29px;height:36px;background:#555;"></div>
<span class="t" style="left:989.573px;top:403.2px;font-size:8.5px;color:#f0f0f0;transform:scaleX(0.900);">5</span>
<div class="r" style="left:827px;top:412px;width:29px;height:36px;background:#555;"></div>
<span class="t" style="left:839.573px;top:440.2px;font-size:8.5px;color:#f0f0f0;transform:scaleX(0.900);">7</span>
<div class="r" style="left:857px;top:412px;width:29px;height:36px;background:#555;"></div>
<span class="t" style="left:867.445px;top:440.2px;font-size:8.5px;color:#f0f0f0;transform:scaleX(0.900);">10</span>
<div class="r" style="left:887px;top:412px;width:29px;height:36px;background:#555;"></div>
<span class="t" style="left:897.445px;top:440.2px;font-size:8.5px;color:#f0f0f0;transform:scaleX(0.900);">12</span>
<div class="r" style="left:917px;top:412px;width:29px;height:36px;background:#555;"></div>
<span class="t" style="left:927.445px;top:440.2px;font-size:8.5px;color:#f0f0f0;transform:scaleX(0.900);">15</span>
<div class="r" style="left:947px;top:412px;width:29px;height:36px;background:#555;"></div>
<span class="t" style="left:957.445px;top:440.2px;font-size:8.5px;color:#f0f0f0;transform:scaleX(0.900);">20</span>
<div class="r" style="left:977px;top:412px;width:29px;height:36px;background:#555;"></div>
<span class="t" style="left:987.445px;top:440.2px;font-size:8.5px;color:#f0f0f0;transform:scaleX(0.900);">25</span>
<div class="r" style="left:827px;top:449.5px;width:29px;height:36px;background:#555;"></div>
<span class="t" style="left:837.445px;top:477.7px;font-size:8.5px;color:#f0f0f0;transform:scaleX(0.900);">30</span>
<div class="r" style="left:857px;top:449.5px;width:29px;height:36px;background:#555;"></div>
<span class="t" style="left:867.445px;top:477.7px;font-size:8.5px;color:#f0f0f0;transform:scaleX(0.900);">40</span>
<div class="r" style="left:887px;top:449.5px;width:29px;height:36px;background:#555;"></div>
<span class="t" style="left:897.445px;top:477.7px;font-size:8.5px;color:#f0f0f0;transform:scaleX(0.900);">50</span>
<div class="r" style="left:917px;top:449.5px;width:29px;height:36px;background:#555;"></div>
<span class="t" style="left:927.445px;top:477.7px;font-size:8.5px;color:#f0f0f0;transform:scaleX(0.900);">70</span>
<div class="r" style="left:947px;top:449.5px;width:29px;height:36px;background:#555;"></div>
<span class="t" style="left:955.318px;top:477.7px;font-size:8.5px;color:#f0f0f0;transform:scaleX(0.900);">100</span>
<div class="r" style="left:977px;top:449.5px;width:29px;height:36px;background:#555;"></div>
<span class="t" style="left:985.318px;top:477.7px;font-size:8.5px;color:#f0f0f0;transform:scaleX(0.900);">150</span>
<div class="r" style="left:827px;top:487px;width:29px;height:36px;background:#555;"></div>
<span class="t" style="left:835.318px;top:515.2px;font-size:8.5px;color:#f0f0f0;transform:scaleX(0.900);">200</span>
<div class="r" style="left:857px;top:487px;width:29px;height:36px;background:#555;"></div>
<span class="t" style="left:865.318px;top:515.2px;font-size:8.5px;color:#f0f0f0;transform:scaleX(0.900);">300</span>
<div class="r" style="left:887px;top:487px;width:29px;height:36px;background:#555;"></div>
<span class="t" style="left:895.318px;top:515.2px;font-size:8.5px;color:#f0f0f0;transform:scaleX(0.900);">400</span>
<div class="r" style="left:917px;top:487px;width:29px;height:36px;background:#555;"></div>
<span class="t" style="left:925.318px;top:515.2px;font-size:8.5px;color:#f0f0f0;transform:scaleX(0.900);">500</span>
<div class="r" style="left:947px;top:487px;width:29px;height:36px;background:#555;"></div>
<span class="t" style="left:955.318px;top:515.2px;font-size:8.5px;color:#f0f0f0;transform:scaleX(0.900);">700</span>
<div class="r" style="left:977px;top:487px;width:29px;height:36px;background:#555;"></div>
<span class="t" style="left:983.191px;top:515.2px;font-size:8.5px;color:#f0f0f0;transform:scaleX(0.900);">1000</span>
<svg style="left:827px;top:375px" width="181" height="150" viewBox="0 0 181 150"><circle cx="14.7" cy="14.6" r="0.8" fill="#626262"/><circle cx="44.7" cy="14.6" r="0.9" fill="#707070"/><circle cx="74.7" cy="14.6" r="1" fill="#b0b0b0"/><circle cx="104.7" cy="14.6" r="1.3" fill="#dcdcdc"/><circle cx="134.7" cy="14.6" r="1.6" fill="#ececec"/><circle cx="164.7" cy="14.6" r="2" fill="#f0f0f0"/><circle cx="14.7" cy="51.6" r="3" fill="#f0f0f0"/><circle cx="44.7" cy="51.6" r="4" fill="#f0f0f0"/><circle cx="74.7" cy="51.6" r="4.5" fill="#f0f0f0"/><circle cx="104.7" cy="51.6" r="5.65" fill="#f0f0f0"/><circle cx="134.7" cy="51.6" r="7.35" fill="#f0f0f0"/><circle cx="164.7" cy="51.6" r="8.9" fill="#f0f0f0"/><circle cx="14.7" cy="89.1" r="9" fill="#f0f0f0"/><circle cx="44.7" cy="89.1" r="9" fill="#f0f0f0"/><circle cx="74.7" cy="89.1" r="9" fill="#f0f0f0"/><circle cx="104.7" cy="89.1" r="9" fill="#f0f0f0"/><circle cx="134.7" cy="89.1" r="9" fill="#f0f0f0"/><circle cx="164.7" cy="89.1" r="9" fill="#f0f0f0"/><circle cx="14.7" cy="126.6" r="9" fill="#f0f0f0"/><circle cx="44.7" cy="126.6" r="9" fill="#f0f0f0"/><circle cx="74.7" cy="126.6" r="9" fill="#f0f0f0"/><circle cx="104.7" cy="126.6" r="9" fill="#f0f0f0"/><circle cx="134.7" cy="126.6" r="9" fill="#f0f0f0"/><circle cx="164.7" cy="126.6" r="9" fill="#f0f0f0"/></svg>
<div class="r" style="left:1009px;top:375px;width:14px;height:155px;background:#262626;"></div>
<div class="r" style="left:1009.5px;top:384.5px;width:13px;height:136px;background:linear-gradient(90deg,#3c3c3c,#383838 60%,#323232);border-radius:3px;"></div>
<div class="r" style="left:1009.5px;top:383px;width:13px;height:135px;background:linear-gradient(90deg,#626262,#727272 50%,#636363);border-radius:3px;"></div>
<svg style="left:1013px;top:378px" width="6" height="5"><path d="M3 0l3 4.500h-6z" fill="#9a9a9a"/></svg>
<svg style="left:1013px;top:522.5px" width="6" height="5"><path d="M0 0h6l-3 4.500z" fill="#9a9a9a"/></svg>
<div class="r" style="left:1008px;top:530px;width:16px;height:1px;background:#262626;"></div>
<div class="r" style="left:0px;top:530px;width:1024px;height:17px;background:#262626;"></div>
<div class="r" style="left:0px;top:530px;width:1024px;height:1px;background:#1d1d1d;"></div>
<span class="t" style="left:4px;top:533.5px;font-size:9.5px;color:#d2d2d2;transform:scaleX(0.865);">1600 * 1200 pixel</span>
<span class="t" style="left:76px;top:533.5px;font-size:9.5px;color:#d2d2d2;transform:scaleX(0.907);">(11.6 * 8.7cm)</span>
<span class="t" style="left:137px;top:533.5px;font-size:9.5px;color:#d2d2d2;transform:scaleX(0.898);">350 dpi</span>
<span class="t" style="left:171.7px;top:533.5px;font-size:9.5px;color:#d2d2d2;transform:scaleX(0.831);">66 %</span>
<span class="t" style="left:197.5px;top:533.5px;font-size:9.5px;color:#d2d2d2;transform:scaleX(0.864);">( 1128, 1007 )</span>
<span class="t" style="left:255px;top:533.5px;font-size:9.5px;color:#d2d2d2;transform:scaleX(0.944);">Draw a straight line by holding down Shift, Change a brush size by holding down Ctrl, Alt, and dragging</span>
<div class="r" id="taskbar" style="left:0;top:547px;width:1024px;height:29px;background:#17150f;overflow:hidden;">
<div class="r" style="left:0px;top:0px;width:1024px;height:29px;background:linear-gradient(90deg,#14120d 0,#17140e 18%,#1f1b12 34%,#262016 45%,#221f15 52%,#1b2418 60%,#18231a 68%,#141a14 76%,#0f100e 84%,#0c0c0c 100%);"></div>
<div class="r" style="left:560px;top:-8px;width:200px;height:44px;background:radial-gradient(closest-side,rgba(50,78,50,.45),rgba(50,78,50,0));"></div>
<div class="r" style="left:400px;top:-6px;width:150px;height:40px;background:radial-gradient(closest-side,rgba(80,66,36,.35),rgba(80,66,36,0));"></div>
<div class="r" style="left:0px;top:0px;width:1024px;height:1px;background:#5a5a5a;"></div>
<div class="r" style="left:196px;top:0.5px;width:44px;height:28.5px;background:linear-gradient(180deg,rgba(255,255,255,0.286) 0,rgba(255,255,255,0.198) 45%,rgba(255,255,255,0.121) 55%,rgba(255,255,255,0.22) 100%);border:1px solid rgba(255,255,255,0.33);border-radius:2px;"></div>
<div class="r" style="left:243px;top:0.5px;width:43.5px;height:28.5px;background:linear-gradient(180deg,rgba(255,255,255,0.65) 0,rgba(255,255,255,0.45) 45%,rgba(255,255,255,0.275) 55%,rgba(255,255,255,0.5) 100%);border:1px solid rgba(255,255,255,0.75);border-radius:2px;"></div>
<div class="r" style="left:289px;top:0.5px;width:44px;height:28.5px;background:linear-gradient(180deg,rgba(255,255,255,0.338) 0,rgba(255,255,255,0.234) 45%,rgba(255,255,255,0.143) 55%,rgba(255,255,255,0.26) 100%);border:1px solid rgba(255,255,255,0.39);border-radius:2px;"></div>
<svg style="left:5px;top:0px" width="31" height="29" viewBox="0 0 31 29"><defs><radialGradient id="orb" cx="50%" cy="30%" r="75%"><stop offset="0" stop-color="#8cc4ec"/><stop offset=".45" stop-color="#3a86cc"/><stop offset=".8" stop-color="#1858a8"/><stop offset="1" stop-color="#0e3a78"/></radialGradient><radialGradient id="orbg" cx="50%" cy="50%" r="50%"><stop offset="0" stop-color="#40d8ff" stop-opacity=".95"/><stop offset="1" stop-color="#40d8ff" stop-opacity="0"/></radialGradient></defs><circle cx="15.100" cy="14.300" r="13.700" fill="url(#orb)" stroke="#7fa8c8" stroke-width=".7"/><ellipse cx="15.500" cy="24" rx="9" ry="5" fill="url(#orbg)"/><ellipse cx="15" cy="7" rx="10.500" ry="5.500" fill="#fff" opacity=".22"/><path d="M8.800 7.800q3-1.800 6.200-.5l-1.200 5.800q-3-1.300-6.200.5z" fill="#f0582c"/><path d="M16.200 7.800q3.200 1.500 6.400-.3l-1.200 5.800q-3.200 1.800-6.400.3z" fill="#8cc63c"/><path d="M7.300 14.800q3-1.800 6.200-.5l-1.200 5.800q-3-1.300-6.200.5z" fill="#3a9ce8"/><path d="M14.700 14.800q3.200 1.500 6.400-.3l-1.200 5.800q-3.200 1.800-6.400.3z" fill="#fac41c"/></svg>
<svg style="left:68px;top:5px" width="22" height="19" viewBox="0 0 22 19"><path d="M20.600 0.300V17.500L10.700 9z" fill="#dccfff"/><path d="M20.600 9V17.500L10.700 9z" fill="#cdbcf6"/><path d="M0 0.600V17.500L14 8.600z" fill="#6a2fd8"/><path d="M0 9V17.500L14 8.600z" fill="#5f2ac6"/></svg>
<svg style="left:112px;top:2px" width="28" height="26" viewBox="0 0 28 26"><defs><linearGradient id="ieg" x1="0" y1="0" x2="0" y2="1"><stop offset="0" stop-color="#5ab8f4"/><stop offset=".6" stop-color="#1c7ad4"/><stop offset="1" stop-color="#3aa8ec"/></linearGradient></defs><text x="6" y="22" font-family="Liberation Sans, sans-serif" font-weight="bold" font-size="28.500" fill="url(#ieg)" stroke="#1a6cc4" stroke-width=".5">e</text><ellipse cx="13" cy="13" rx="14" ry="5.200" fill="none" stroke="#f0b428" stroke-width="2" transform="rotate(-38 13.300 12.500)" stroke-dasharray="50 9" stroke-dashoffset="-3"/></svg>
<svg style="left:159px;top:2px" width="27" height="26" viewBox="0 0 27 26"><circle cx="12.700" cy="13" r="11.600" fill="#5cb052" stroke="#eef6ea" stroke-width=".9"/><path d="M12.500 13L15 1.200L23.800 1.400L22.600 8.500z" fill="#f2f6ee"/><path d="M14.600 8L15.300 2.500L17.300 2.800L16 8.600z" fill="#f07a2a"/><path d="M16.800 9.300L19.500 3.500L22.800 2.200L18.300 10.200z" fill="#5cb052"/><path d="M18.800 10.600L22.300 6.600L23.400 8.800L19.800 11.600z" fill="#f07a2a"/><circle cx="12.300" cy="13.200" r="4.300" fill="#5cb052" stroke="#fff" stroke-width="1.100"/></svg>
<svg style="left:207px;top:3px" width="23" height="23" viewBox="-11.500 -11.500 23 23"><circle r="11" fill="#db4437"/><path d="M0 0L-9.526 -5.500A11 11 0 0 0 0 11L4.763 2.750z" fill="#0f9d58"/><path d="M0 0L4.763 2.750L0 11A11 11 0 0 0 9.526 -5.500L0 -5.500z" fill="#ffcd40"/><path d="M0 -5.500H9.526A11 11 0 0 0 -9.526 -5.500z" fill="#db4437"/><path d="M-9.526 -5.500A11 11 0 0 0 0 11L4.763 2.750L0 0z" fill="#0f9d58"/><circle r="5.200" fill="#f1f1f1"/><circle r="4.100" fill="#4285f4"/></svg>
<svg style="left:253px;top:2px" width="24" height="24.500" viewBox="0 0 24 24.500"><rect x="0" y="0" width="23.600" height="24" rx="4" fill="#fafaf8"/><defs><linearGradient id="mb" x1="0" y1="0" x2="1" y2="1"><stop offset="0" stop-color="#18a8d8"/><stop offset=".45" stop-color="#20c0b0"/><stop offset=".75" stop-color="#48c830"/><stop offset="1" stop-color="#c8d820"/></linearGradient><linearGradient id="mb2" x1="0" y1="1" x2="1" y2="0"><stop offset="0" stop-color="#e8202c"/><stop offset=".6" stop-color="#f06a20"/><stop offset="1" stop-color="#f8c020"/></linearGradient></defs><path d="M12.500 3C8 5 5 8.500 5 12.500a7 7 0 0 0 14 0C19 9 16 8 13.500 6.500C12.600 5.300 12.300 4 12.500 3z" fill="url(#mb)"/><path d="M12.500 3C8.500 5 5.500 8 5.200 11C8 11.500 12.500 10 14.500 7.200C13.200 6 12.300 4.500 12.500 3z" fill="url(#mb2)"/></svg>
<svg style="left:299px;top:2px" width="28" height="25" viewBox="0 0 28 25"><path d="M2 14C2 8 8 5.500 14 6.500s10 5 8 9.500c-1.500 3.500-5 2-6.500 3.500s-1 3.500-4.500 3.500C6 23 2 19.500 2 14z" fill="#dfe7ee" stroke="#8fa0b0" stroke-width=".7"/><circle cx="7" cy="11.500" r="1.700" fill="#e05a5a"/><circle cx="11.500" cy="9" r="1.700" fill="#7ac060"/><circle cx="16.500" cy="9.500" r="1.700" fill="#e8c840"/><circle cx="7" cy="16.500" r="1.700" fill="#4a7ad0"/><circle cx="13" cy="15" r="1.600" fill="#333"/><path d="M23.500 1L15 22" stroke="#d89030" stroke-width="1.800"/><path d="M23.800 0.500l-1.800 4.500" stroke="#c0a070" stroke-width="2.600"/></svg>
<span class="t" style="left:900px;top:7.5px;font-size:9.5px;color:#e8e8e8;transform:scaleX(0.909);">EN</span>
<svg style="left:923.500px;top:14.500px" width="7" height="4"><path d="M3.500 0l3.500 4h-7z" fill="#fff"/></svg>
<span class="t" style="left:965.5px;top:2px;font-size:9.5px;color:#fff;transform:scaleX(0.898);">12:14 PM</span>
<span class="t" style="left:964px;top:16px;font-size:9.5px;color:#fff;transform:scaleX(0.899);">10/2/2021</span>
<div class="r" style="left:1014px;top:0px;width:10px;height:29px;background:linear-gradient(90deg,#2a2a2a,#4a4a4a 40%,#1a1a1a);border-left:1px solid #555;"></div>
</div>
<svg style="left:137px;top:71px" width="672" height="445" viewBox="137 71 672 445">
<defs><clipPath id="clipT"><rect x="300" y="249" width="200" height="140"/></clipPath><clipPath id="clipE"><rect x="440" y="284" width="120" height="100"/></clipPath><filter id="artsh" x="-5%" y="-5%" width="110%" height="110%"><feOffset in="SourceAlpha" dx="2.600" dy="1.600" result="o"/><feFlood flood-color="#3328ec"/><feComposite in2="o" operator="in" result="s"/><feMerge><feMergeNode in="s"/><feMergeNode in="SourceGraphic"/></feMerge></filter></defs>
<g filter="url(#artsh)" fill="#fc10a2" stroke="#fc10a2" stroke-linejoin="round" stroke-linecap="round"><g id="lettering" font-family="Liberation Sans, sans-serif" font-weight="bold"><g clip-path="url(#clipT)"><text transform="translate(349 332) scale(1.02 1) skewX(-5)" font-size="198" stroke-width="5">T</text></g><g clip-path="url(#clipE)"><text transform="translate(470 357.500) scale(0.620 1) skewX(-12)" font-size="134" stroke-width="10">è</text></g><text transform="translate(553.500 347.500) scale(0.490 1) skewX(-8)" font-size="128" stroke-width="14">o</text></g><path d="M294 245Q335 256 398 249Q432 244 455 259" fill="none" stroke-width="7.500"/><path d="M398 254C382 330 402 363 428 366.500C448 368 459 351 466 336C464 332 460 332 458 336C454 345 449 351 443 346C436 338 431 300 434.500 254z" stroke-width="3"/><ellipse cx="552.500" cy="314" rx="22.500" ry="39.500" transform="rotate(10 552.500 314)" stroke-width="1"/><path d="M548 280Q562 272 580 281" fill="none" stroke-width="10"/><path d="M545 348Q560 356 578 346" fill="none" stroke-width="10"/><path d="M480.500 249.500L501 262" fill="none" stroke-width="6.500"/><path d="M512 352Q522 350 528 340" fill="none" stroke-width="6"/><path d="M566 333.500Q592 331 615.500 317.500" fill="none" stroke-width="5.500"/><linearGradient id="pg12" gradientUnits="userSpaceOnUse" x1="273.5" y1="208.5" x2="284.5" y2="220.5"><stop offset="0" stop-color="#fc10a2"/><stop offset=".55" stop-color="#fc10a2"/><stop offset="1" stop-color="#fc10a2" stop-opacity=".15"/></linearGradient><path d="M269.2 212.4A5.8 5.8 0 1 1 277.8 204.6L286.0 219.1L283.0 221.9z" fill="url(#pg12)" stroke="none"/><linearGradient id="pg13" gradientUnits="userSpaceOnUse" x1="285.5" y1="200" x2="291.5" y2="219"><stop offset="0" stop-color="#fc10a2"/><stop offset=".55" stop-color="#fc10a2"/><stop offset="1" stop-color="#fc10a2" stop-opacity=".15"/></linearGradient><path d="M279.6 201.9A6.2 6.2 0 1 1 291.4 198.1L293.6 218.3L289.4 219.7z" fill="url(#pg13)" stroke="none"/><linearGradient id="pg14" gradientUnits="userSpaceOnUse" x1="303.8" y1="196.5" x2="302.5" y2="214.5"><stop offset="0" stop-color="#fc10a2"/><stop offset=".55" stop-color="#fc10a2"/><stop offset="1" stop-color="#fc10a2" stop-opacity=".15"/></linearGradient><path d="M298.0 196.1A5.8 5.8 0 1 1 309.6 196.9L304.5 214.6L300.5 214.4z" fill="url(#pg14)" stroke="none"/><linearGradient id="pg15" gradientUnits="userSpaceOnUse" x1="632.5" y1="247" x2="641.5" y2="259.5"><stop offset="0" stop-color="#fc10a2"/><stop offset=".55" stop-color="#fc10a2"/><stop offset="1" stop-color="#fc10a2" stop-opacity=".15"/></linearGradient><path d="M627.8 250.4A5.8 5.8 0 1 1 637.2 243.6L643.1 258.3L639.9 260.7z" fill="url(#pg15)" stroke="none"/><linearGradient id="pg16" gradientUnits="userSpaceOnUse" x1="647.5" y1="247" x2="646.5" y2="259.5"><stop offset="0" stop-color="#fc10a2"/><stop offset=".55" stop-color="#fc10a2"/><stop offset="1" stop-color="#fc10a2" stop-opacity=".15"/></linearGradient><path d="M641.7 246.5A5.8 5.8 0 1 1 653.3 247.5L648.5 259.7L644.5 259.3z" fill="url(#pg16)" stroke="none"/><linearGradient id="pg17" gradientUnits="userSpaceOnUse" x1="661.5" y1="251" x2="652" y2="263"><stop offset="0" stop-color="#fc10a2"/><stop offset=".55" stop-color="#fc10a2"/><stop offset="1" stop-color="#fc10a2" stop-opacity=".15"/></linearGradient><path d="M657.0 247.4A5.8 5.8 0 1 1 666.0 254.6L653.6 264.3L650.4 261.7z" fill="url(#pg17)" stroke="none"/><path d="M396 366.500Q388 362.500 379 364Q368 369 368.500 380Q371 388 378 386.500Q385 383 387.500 366" fill="none" stroke-width="3.600"/><path d="M619.500 346.500Q628 339.500 640 341.500Q651 346 649 358Q646 366.500 639.500 363.500Q634 360 631 352Q628.500 345.500 624.500 344" fill="none" stroke-width="4"/></g>
<g fill="none" stroke="#ffe0f2" stroke-width="1.150" stroke-linejoin="round"><path d="M409 266C405 262 401 272 401.500 285C402 298 405 308 407.500 314C408 300 412 285 411.500 274C411.300 270 410.500 267 409 266z"/><path d="M490 303C487 312 485.500 326 487 334C488.500 341 493 343 494 339C494.500 332 491 318 490 303z"/><path d="M566 293C563 291 561.500 300 562 312C562.500 324 566 334 569 339C569 326 570.500 310 569.500 300C569 296 568 293.500 566 293z"/></g><circle cx="412" cy="326" r=".7" fill="#ffd0ec"/><circle cx="490.500" cy="300" r=".7" fill="#ffd0ec"/><circle cx="569" cy="343" r=".7" fill="#ffd0ec"/>
</svg>
<svg style="left:686px;top:476px" width="280" height="92" viewBox="686 476 280 92"><defs><linearGradient id="bal" x1="0" y1="0" x2="0" y2="1"><stop offset="0" stop-color="#ffffff"/><stop offset=".5" stop-color="#f4f4fa"/><stop offset="1" stop-color="#dfe0ee"/></linearGradient><filter id="bsh" x="-5%" y="-10%" width="110%" height="125%"><feGaussianBlur stdDeviation="1.500"/></filter></defs><path d="M695 482.500H954.500Q957 482.500 957 485V544Q957 546.500 954.500 546.500H946.500L945.500 561.500L930.500 546.500H695Q692.500 546.500 692.500 544V485Q692.500 482.500 695 482.500z" fill="#000" opacity=".45" filter="url(#bsh)" transform="translate(1 1.500)"/><path d="M695 482.500H954.500Q957 482.500 957 485V544Q957 546.500 954.500 546.500H946.500L945.500 561.500L930.500 546.500H695Q692.500 546.500 692.500 544V485Q692.500 482.500 695 482.500z" fill="url(#bal)" stroke="#6e6e6e" stroke-width="1"/></svg>
<span class="t" style="left:729px;top:490.5px;font-size:12.3px;color:#2b4c9e;transform:scaleX(0.966);">7 min (12%) remaining</span>
<span class="t" style="left:729px;top:506px;font-size:9.7px;color:#151515;transform:scaleX(0.922);">Your battery is low (12%). If you need to continue using</span>
<span class="t" style="left:729px;top:517.3px;font-size:9.7px;color:#151515;transform:scaleX(0.947);">your computer, either plug in your computer, or shut it</span>
<span class="t" style="left:729px;top:528.6px;font-size:9.7px;color:#151515;transform:scaleX(0.928);">down and then change the battery.</span>
<svg style="left:700px;top:487px" width="22" height="27" viewBox="0 0 22 27"><defs><linearGradient id="bt" x1="0" y1="0" x2="1" y2="0"><stop offset="0" stop-color="#8e9499"/><stop offset=".35" stop-color="#e4e8ea"/><stop offset=".6" stop-color="#b8bec2"/><stop offset="1" stop-color="#70767b"/></linearGradient></defs><path d="M6.500 4.500a6.500 2.500 0 0 1 13 0V20a6.500 2.500 0 0 1-13 0z" fill="url(#bt)" stroke="#6a7075" stroke-width=".6"/><ellipse cx="13" cy="4.500" rx="6.500" ry="2.500" fill="#d8dcdf" stroke="#7a8085" stroke-width=".5"/><ellipse cx="13" cy="3.200" rx="2.500" ry="1.200" fill="#a8aeb2"/><path d="M6.500 17.500a6.500 2.500 0 0 0 13 0V20a6.500 2.500 0 0 1-13 0z" fill="#e8c818"/><path d="M6.200 13.500L11.700 24.500H0.700z" fill="#f5d41c" stroke="#b89a10" stroke-width=".7" stroke-linejoin="round"/><path d="M6.200 17v4M6.200 22.200v1.200" stroke="#222" stroke-width="1.400"/></svg>
<svg style="left:924px;top:490px" width="26" height="10" viewBox="0 0 26 10"><path d="M1.500 1.500a2.300 2.300 0 0 0 3 3l3.500 3.500 1.200-1.200L5.700 3.300a2.300 2.300 0 0 0-3-3l1.500 1.500-1.200 1.200z" fill="#8c8c94"/><path d="M16.500 1.500l5.500 6M22 1.500l-5.500 6" stroke="#8c8c94" stroke-width="1.700"/></svg>
<svg style="left:938px;top:557px" width="14" height="14" viewBox="0 0 14 14"><rect x="2" y="1.500" width="5.500" height="9.500" fill="none" stroke="#f2f2f2" stroke-width="1.200"/><path d="M9 6.500L13 12.500H5z" fill="#f5d41c"/></svg>
<svg style="left:3px;top:64px" width="20" height="20" viewBox="0 0 20 20"><path d="M16.500 3.500L9 11.500" stroke="#fff" stroke-width="2.200" stroke-linecap="round"/><path d="M8.800 10.800C6.500 10.500 5.500 12.500 5.200 14.500C4.800 15.800 4 16.200 3.500 16.500C6.500 17.500 10 16 10.200 12.200z" fill="#fff"/></svg>
<svg style="left:3px;top:88px" width="20" height="20" viewBox="0 0 20 20"><g transform="rotate(-38 10 10)"><rect x="4.500" y="6" width="11" height="8" rx="1" fill="none" stroke="#f2f2f2" stroke-width="1.300"/><rect x="4.500" y="6" width="4.500" height="8" rx="1" fill="#f2f2f2"/></g></svg>
<svg style="left:3px;top:111px" width="20" height="20" viewBox="0 0 20 20"><rect x="5" y="5" width="10" height="10" fill="none" stroke="#c4c4c4" stroke-width="1.050"/></svg>
<svg style="left:3px;top:135px" width="20" height="20" viewBox="0 0 20 20"><path d="M16.500 4L10.500 10.500" stroke="#f2f2f2" stroke-width="2.600" stroke-linecap="round"/><path d="M10.800 9.200L9 12.200L11.800 11z" fill="#f2f2f2"/><circle cx="7.500" cy="13" r="1.100" fill="#f2f2f2"/><circle cx="5" cy="11" r="1" fill="#f2f2f2"/><circle cx="8" cy="16" r="1" fill="#f2f2f2"/><circle cx="4.500" cy="15.500" r=".9" fill="#f2f2f2"/></svg>
<svg style="left:3px;top:163px" width="20" height="20" viewBox="0 0 20 20"><path d="M10 3.500V16.500M3.500 10H16.500" stroke="#f2f2f2" stroke-width="1.300"/><path d="M10 2l2.300 3h-4.600zM10 18l2.300-3h-4.600zM2 10l3-2.300v4.600zM18 10l-3-2.300v4.600z" fill="#f2f2f2"/></svg>
<svg style="left:3px;top:191px" width="20" height="20" viewBox="0 0 20 20"><rect x="5" y="5" width="10.500" height="10.500" fill="#e6e6e6"/></svg>
<svg style="left:3px;top:214px" width="20" height="20" viewBox="0 0 20 20"><path d="M4 10.500L10 5.500L15.500 10L9 16.500z" fill="#f2f2f2"/><path d="M6.500 8.500L10 5.500L13 8" fill="none" stroke="#f2f2f2" stroke-width="1.200"/><path d="M7.500 7.500C6.500 4.500 8.500 3 10 5" fill="none" stroke="#f2f2f2" stroke-width="1"/><path d="M15.500 10.500C17.500 11.500 17.500 14 17 16.500C16 15.500 15.500 13 15.500 10.500z" fill="#f2f2f2"/></svg>
<svg style="left:3px;top:238px" width="20" height="20" viewBox="0 0 20 20"><defs><linearGradient id="tg" x1="0" y1="0" x2="1" y2="0"><stop offset="0" stop-color="#555"/><stop offset="1" stop-color="#d8d8d8"/></linearGradient></defs><rect x="4" y="5" width="12.500" height="10" fill="url(#tg)" stroke="#e0e0e0" stroke-width="1"/></svg>
<svg style="left:3px;top:266px" width="20" height="20" viewBox="0 0 20 20"><rect x="5" y="5" width="10" height="10" fill="none" stroke="#d0d0d0" stroke-width="1.300" stroke-dasharray="1.600 1.200"/></svg>
<svg style="left:3px;top:290px" width="20" height="20" viewBox="0 0 20 20"><path d="M4.500 13.500C3 10.500 6 8 9 7.500S15 4.500 16.500 7.500S14 12.500 11.500 13.500S6 16.500 4.500 13.500z" fill="none" stroke="#d0d0d0" stroke-width="1.300" stroke-dasharray="1.600 1.300"/></svg>
<svg style="left:3px;top:313px" width="20" height="20" viewBox="0 0 20 20"><path d="M4.500 16L11.500 8.500" stroke="#f2f2f2" stroke-width="2.400" stroke-linecap="round"/><path d="M13.500 3.500v2.500M16.500 6.500l-2 1.200M16.800 10.500h-2.300M11 4.500l1 1.800" stroke="#f2f2f2" stroke-width="1" stroke-linecap="round"/></svg>
<svg style="left:3px;top:336px" width="20" height="20" viewBox="0 0 20 20"><path d="M11 5H4.500V15.500H15V10" fill="none" stroke="#d0d0d0" stroke-width="1.200" stroke-dasharray="1.500 1.200"/><path d="M16 4.500L10.500 11" stroke="#f2f2f2" stroke-width="2.600" stroke-linecap="round"/><path d="M10.500 9.800L9 13L12 11.500z" fill="#f2f2f2"/></svg>
<svg style="left:3px;top:359px" width="20" height="20" viewBox="0 0 20 20"><path d="M8 5H4.500V15.500H15V13" fill="none" stroke="#d0d0d0" stroke-width="1.200" stroke-dasharray="1.500 1.200"/><g transform="rotate(-40 12.500 9)"><rect x="8" y="6" width="9" height="6.500" rx="1" fill="none" stroke="#f2f2f2" stroke-width="1.200"/><rect x="8" y="6" width="3.500" height="6.500" rx="1" fill="#f2f2f2"/></g></svg>
<svg style="left:3px;top:388px" width="20" height="20" viewBox="0 0 20 20"><text x="10" y="16.500" text-anchor="middle" font-family="Liberation Serif, serif" font-weight="bold" font-size="18" fill="#f4f4f4">T</text></svg>
<svg style="left:3px;top:411px" width="20" height="20" viewBox="0 0 20 20"><path d="M4.500 7L8 4L12 5.500L12 9" fill="none" stroke="#f2f2f2" stroke-width="1.200"/><path d="M4.500 7L5.500 11.500L9 12" fill="none" stroke="#f2f2f2" stroke-width="1.200"/><path d="M10.500 9L16.500 12.500L13.800 13.200L15.500 16.500L14 17.200L12.500 14L10.500 16z" fill="#f2f2f2"/></svg>
<svg style="left:3px;top:434px" width="20" height="20" viewBox="0 0 20 20"><path d="M15.500 4.500L8 12" stroke="#f2f2f2" stroke-width="3.200" stroke-linecap="round"/><path d="M10 8.500L3.500 15.500H9L12.500 11z" fill="none" stroke="#f2f2f2" stroke-width="1.200" stroke-linejoin="round"/></svg>
<svg style="left:3px;top:463px" width="20" height="20" viewBox="0 0 20 20"><path d="M12 8.500L5.500 15L4.500 16.500L6 15.800L12.500 9.500" fill="none" stroke="#f2f2f2" stroke-width="1.500"/><path d="M11 6.500L14 9.500" stroke="#f2f2f2" stroke-width="2.200" stroke-linecap="round"/><path d="M13 7.500L15.500 5" stroke="#f2f2f2" stroke-width="3" stroke-linecap="round"/></svg>
<svg style="left:3px;top:486px" width="20" height="20" viewBox="0 0 20 20"><g stroke="#f2f2f2" stroke-width="1.900" stroke-linecap="round"><path d="M6.600 11V6.500"/><path d="M8.900 10V4.600"/><path d="M11.200 10V4.900"/><path d="M13.500 11V6.800"/></g><path d="M5.700 10.500H14.400V13C14.400 16 12.800 17.500 10.500 17.500C8.500 17.500 7 16.500 6 15L3.300 11.300C3 10.300 4.300 9.800 5 10.800L5.700 11.800z" fill="#f2f2f2"/></svg>
<svg style="left:9px;top:35px" width="17.5" height="18" viewBox="0 0 17.5 18"><defs><filter id="glow" x="-30%" y="-30%" width="160%" height="160%"><feGaussianBlur stdDeviation="1.100"/></filter></defs><path d="M4.500 13.500H13a2.500 2.500 0 0 0 .500-4.900A3.600 3.600 0 0 0 7 7.300A3 3 0 0 0 4.500 13.500z" fill="#6aa8e8" filter="url(#glow)"/><path d="M4.800 13H12.800a2.200 2.200 0 0 0 .400-4.400A3.400 3.400 0 0 0 7 7.600A2.700 2.700 0 0 0 4.800 13z" fill="#fff"/></svg>
<svg style="left:29.2px;top:35px" width="17.5" height="18" viewBox="0 0 17.5 18"><path d="M6 8H4.500V14.500H13V8H11.500" fill="none" stroke="#f0f0f0" stroke-width="1.200"/><path d="M8.750 11.500V4.500" stroke="#f0f0f0" stroke-width="1.300"/><path d="M8.750 3L11.300 6H6.200z" fill="#f0f0f0"/></svg>
<svg style="left:49.4px;top:35px" width="17.5" height="18" viewBox="0 0 17.5 18"><ellipse cx="8.750" cy="8.300" rx="5.600" ry="4" fill="#f0f0f0"/><path d="M6 11l-.500 3.200L9 11.800z" fill="#f0f0f0"/><path d="M7.600 7.200a1.200 1.200 0 1 1 1.700 1.100v.700" fill="none" stroke="#999" stroke-width=".8"/></svg>
<svg style="left:69.6px;top:35px" width="17.5" height="18" viewBox="0 0 17.5 18"><path d="M2.800 4.500H14.800V12.300H10L8.800 14L7.600 12.300H2.800z" fill="#f0f0f0"/><path d="M4.500 7.200H13M4.500 9.700H10.500" stroke="#5a5a5a" stroke-width="1.200"/></svg>
<svg style="left:89.8px;top:35px" width="17.5" height="18" viewBox="0 0 17.5 18"><path d="M4.800 4.500H10.500L13 7V14H4.800z" fill="none" stroke="#f0f0f0" stroke-width="1.100"/><path d="M5 9H12.800M5 11.500H12.800" stroke="#f0f0f0" stroke-width="1.100"/></svg>
<svg style="left:110px;top:35px" width="17.5" height="18" viewBox="0 0 17.5 18"><path d="M3 3.500H14.500V12.500H8" fill="none" stroke="#cfcfcf" stroke-width="1"/><path d="M5.500 3.500V8M3 6.500H14.500M6 9.500H14.500" stroke="#cfcfcf" stroke-width="1"/><circle cx="5.500" cy="12" r="2.800" fill="#464646" stroke="#cfcfcf" stroke-width="1"/><path d="M5.500 10.500V12H6.800" fill="none" stroke="#cfcfcf" stroke-width=".8"/></svg>
<svg style="left:130.2px;top:35px" width="17.5" height="18" viewBox="0 0 17.5 18"><path d="M3.500 6h2.600v2.300h-2.600zM6.700 6h2.600v2.300h-2.600zM3.500 8.900h2.600v2.300h-2.600zM6.700 8.900h2.600v2.300h-2.600zM9.900 8.900h2.600v2.300h-2.600zM3.500 11.800h2.600v2.300h-2.600zM6.700 11.800h2.600v2.300h-2.600zM9.900 11.800h2.600v2.300h-2.600z" fill="#f0f0f0"/><path d="M13.800 3.500L10.800 7.500" stroke="#f0f0f0" stroke-width="1.500"/><circle cx="14.300" cy="3" r=".9" fill="none" stroke="#f0f0f0" stroke-width=".6"/></svg>
<svg style="left:180px;top:35px" width="21" height="18" viewBox="0 0 21 18"><path d="M4 8.500L9.500 4V6.800C14 6.800 17 9 17.500 13.500C15.500 11 13 10.300 9.500 10.500V13z" fill="#f0f0f0"/></svg>
<svg style="left:206px;top:35px" width="22" height="18" viewBox="0 0 22 18"><path d="M18 8.500L12.500 4V6.800C8 6.800 5 9 4.500 13.500C6.500 11 9 10.300 12.500 10.500V13z" fill="#f0f0f0"/></svg>
<svg style="left:246px;top:35px" width="17.5" height="18" viewBox="0 0 17.5 18"><circle cx="8.750" cy="9" r="5.800" fill="none" stroke="#9bcdf5" stroke-width="1.200"/><path d="M4.800 4.800L12.700 13.200" stroke="#9bcdf5" stroke-width="1.200"/></svg>
<svg style="left:266.15px;top:35px" width="17.5" height="18" viewBox="0 0 17.5 18"><path d="M3 5.500L14.500 3.800M3 7.300L14.500 6M3 9.100L14.500 8.300M3 10.900L14.500 10.600M3 12.700L14.500 12.800M3 14.500L14.500 15" stroke="#cfcfcf" stroke-width=".8"/></svg>
<svg style="left:286.3px;top:35px" width="17.5" height="18" viewBox="0 0 17.5 18"><path d="M4 3.500V14.500M5.900 3.500V14.500M7.800 3.500V14.500M9.700 3.500V14.500M11.600 3.500V14.500M13.500 3.500V14.500M3 4.500H14.500M3 6.400H14.500M3 8.300H14.500M3 10.200H14.500M3 12.100H14.500M3 14H14.500" stroke="#cfcfcf" stroke-width=".8"/></svg>
<svg style="left:306.45px;top:35px" width="17.5" height="18" viewBox="0 0 17.5 18"><path d="M4 9L14.500 3.500M4 9L14.500 5.700M4 9L14.500 7.900M4 9L14.500 10.100M4 9L14.500 12.300M4 9L14.500 14.500" stroke="#cfcfcf" stroke-width=".85"/></svg>
<svg style="left:326.6px;top:35px" width="17.5" height="18" viewBox="0 0 17.5 18"><path d="M8.750 3V15M2.800 9H14.700M4.500 4.800L13 13.200M13 4.800L4.500 13.200" stroke="#f0f0f0" stroke-width="1.100"/><circle cx="8.750" cy="9" r="1.500" fill="#464646"/></svg>
<svg style="left:346.75px;top:35px" width="17.5" height="18" viewBox="0 0 17.5 18"><g fill="none" stroke="#cfcfcf" stroke-width=".8"><circle cx="8.750" cy="9" r="6"/><circle cx="8.750" cy="9" r="4.300"/><circle cx="8.750" cy="9" r="2.600"/><circle cx="8.750" cy="9" r="1"/></g></svg>
<svg style="left:366.9px;top:35px" width="17.5" height="18" viewBox="0 0 17.5 18"><path d="M4.500 5.500C11 4.500 10.500 8 8.500 9.500S8 14 13.500 13" fill="none" stroke="#f0f0f0" stroke-width="1.100"/><circle cx="4.500" cy="5.500" r="1.300" fill="#f0f0f0"/><circle cx="13.500" cy="13" r="1.300" fill="#f0f0f0"/></svg>
<svg style="left:387.05px;top:35px" width="17.5" height="18" viewBox="0 0 17.5 18"><circle cx="8.750" cy="9" r="5" fill="none" stroke="#f0f0f0" stroke-width=".9" opacity=".75"/><g fill="#f0f0f0"><circle cx="8.750" cy="4" r="1.250"/><circle cx="8.750" cy="14" r="1.250"/><circle cx="3.750" cy="9" r="1.250"/><circle cx="13.750" cy="9" r="1.250"/><circle cx="5.200" cy="5.450" r="1.250"/><circle cx="12.300" cy="5.450" r="1.250"/><circle cx="5.200" cy="12.550" r="1.250"/><circle cx="12.300" cy="12.550" r="1.250"/></g></svg>
<svg style="left:407.2px;top:35px" width="17.5" height="18" viewBox="0 0 17.5 18"><circle cx="8.750" cy="9" r="5.200" fill="none" stroke="#cfcfcf" stroke-width="1.100"/><circle cx="8.750" cy="9" r="5.900" fill="none" stroke="#cfcfcf" stroke-width="1.400" stroke-dasharray="2.100 2.534"/><circle cx="8.750" cy="9" r="2.200" fill="none" stroke="#cfcfcf" stroke-width="1.100"/></svg>
<svg style="left:830px;top:75px" width="17" height="17" viewBox="0 0 17 17"><circle cx="7.300" cy="7.300" r="3.500" fill="none" stroke="#d4d4d4" stroke-width="1.200"/><path d="M10 10L13 13" stroke="#d4d4d4" stroke-width="1.800" stroke-linecap="round"/><path d="M7.300 5.500V9.200M6.500 6.200L7.300 5.500" stroke="#d4d4d4" stroke-width=".9" fill="none"/></svg>
<svg style="left:855.5px;top:75px" width="17" height="17" viewBox="0 0 17 17"><circle cx="7.300" cy="7.300" r="3.500" fill="none" stroke="#d4d4d4" stroke-width="1.200"/><path d="M10 10L13 13" stroke="#d4d4d4" stroke-width="1.800" stroke-linecap="round"/><path d="M5.500 7.300H9.100M7.300 5.500V9.100" stroke="#d4d4d4" stroke-width="1"/></svg>
<svg style="left:876px;top:75px" width="17" height="17" viewBox="0 0 17 17"><rect x="3.500" y="3.500" width="10" height="10" fill="none" stroke="#d4d4d4" stroke-width="1.100"/><path d="M5 5l2.300 .3-2 2zM12 5l-.3 2.300-2-2zM5 12l.3-2.300 2 2zM12 12l-2.300-.3 2-2z" fill="#d4d4d4"/><path d="M5.500 5.500L11.500 11.500M11.500 5.500L5.500 11.500" stroke="#d4d4d4" stroke-width=".8"/></svg>
<svg style="left:896px;top:75px" width="17" height="17" viewBox="0 0 17 17"><circle cx="7.300" cy="7.300" r="3.500" fill="none" stroke="#d4d4d4" stroke-width="1.200"/><path d="M10 10L13 13" stroke="#d4d4d4" stroke-width="1.800" stroke-linecap="round"/><path d="M5.500 7.300H9.100" stroke="#d4d4d4" stroke-width="1"/></svg>
<svg style="left:921px;top:75px" width="17" height="17" viewBox="0 0 17 17"><path d="M11.800 4.200A5.300 5.300 0 1 1 5 4.400" fill="none" stroke="#d4d4d4" stroke-width="1.400"/><path d="M3.200 3.200L7 3.500L5.300 6.500z" fill="#d4d4d4"/><path d="M6 7.500L10 6L11 9.500L7 11z" fill="#d4d4d4"/></svg>
<svg style="left:942px;top:75px" width="17" height="17" viewBox="0 0 17 17"><rect x="4.500" y="5" width="8" height="7" fill="#f0f0f0"/><path d="M2.500 5V3H5M12 3h2.500V5M14.500 12v2H12M5 14H2.500V12" fill="none" stroke="#f0f0f0" stroke-width="1.200"/></svg>
<svg style="left:962px;top:75px" width="17" height="17" viewBox="0 0 17 17"><path d="M5.200 4.200A5.300 5.300 0 1 0 12 4.400" fill="none" stroke="#d4d4d4" stroke-width="1.400"/><path d="M13.800 3.200L10 3.500L11.700 6.500z" fill="#d4d4d4"/><path d="M6 7.500L10 6L11 9.500L7 11z" fill="#d4d4d4"/></svg>
<svg style="left:987px;top:75px" width="17" height="17" viewBox="0 0 17 17"><rect x="3" y="7" width="4" height="6.500" fill="#d4d4d4"/><rect x="10" y="7" width="4" height="6.500" fill="none" stroke="#d4d4d4" stroke-width="1"/><path d="M5 6C5 2.500 12 2.500 12 6" fill="none" stroke="#d4d4d4" stroke-width="1.100"/></svg>
<svg style="left:917px;top:98px" width="16" height="10" viewBox="0 0 16 10"><path d="M2.500 2.500L6 3.300" stroke="#f040a8" stroke-width=".8"/><path d="M6.500 3.500C6 5 6.200 6.500 7.500 6.800M8.500 5.200C9.500 5 9.300 6.800 8.600 6.500M10.300 5C11.300 4.800 11.300 6.600 10.400 6.500" fill="none" stroke="#e010a0" stroke-width="1.500"/><circle cx="13" cy="4" r=".5" fill="#f060b0"/></svg>
<svg style="left:831px;top:333px" width="17.5" height="17" viewBox="0 0 17.5 17"><path d="M4.500 3.600H10L12.800 6.200V14H4.500z" fill="none" stroke="#d4d4d4" stroke-width="1.100"/><path d="M10 3.600V6.200H12.800" fill="none" stroke="#d4d4d4" stroke-width=".9"/></svg>
<svg style="left:852px;top:333px" width="17" height="17" viewBox="0 0 17 17"><path d="M4.500 3.600H10L12.800 6.200V14H4.500z" fill="none" stroke="#d4d4d4" stroke-width="1.100"/><text x="8.600" y="12.300" text-anchor="middle" font-family="Liberation Sans, sans-serif" font-size="7" font-weight="bold" fill="#d4d4d4">8</text></svg>
<svg style="left:872px;top:333px" width="17" height="17" viewBox="0 0 17 17"><path d="M4.500 3.600H10L12.800 6.200V14H4.500z" fill="none" stroke="#d4d4d4" stroke-width="1.100"/><text x="8.600" y="12.300" text-anchor="middle" font-family="Liberation Sans, sans-serif" font-size="7" font-weight="bold" fill="#d4d4d4">1</text></svg>
<svg style="left:892px;top:333px" width="22.5" height="17" viewBox="0 0 22.5 17"><path d="M3.500 2.500H8L10.500 5V9M7 13H3.500V2.500" fill="none" stroke="#d4d4d4" stroke-width="1.100"/><path d="M9.500 9.500V15M6.800 12.200H12.200" stroke="#d4d4d4" stroke-width="1.500"/><path d="M14.500 6.500H19.500L17 9.500z" fill="#f0f0f0"/></svg>
<svg style="left:917.5px;top:333px" width="17.5" height="17" viewBox="0 0 17.5 17"><path d="M3 5H7L8 6.500H14.500V13.500H3z" fill="#d4d4d4"/><path d="M3 7.500H14.500" stroke="#454545" stroke-width=".7"/></svg>
<svg style="left:943px;top:333px" width="17" height="17" viewBox="0 0 17 17"><rect x="3.500" y="6" width="7.500" height="7.500" fill="#454545" stroke="#d4d4d4" stroke-width="1.100"/><path d="M6 6V3.500H13.500V11H11" fill="none" stroke="#d4d4d4" stroke-width="1.100"/></svg>
<svg style="left:963px;top:333px" width="18" height="17" viewBox="0 0 18 17"><rect x="3" y="3" width="4" height="3.500" fill="#d4d4d4"/><rect x="3" y="10.500" width="4" height="3.500" fill="none" stroke="#d4d4d4" stroke-width=".9"/><rect x="10.500" y="5.500" width="5" height="4.500" fill="#f0f0f0"/><path d="M5 7v2.500M7.500 8H10" stroke="#d4d4d4" stroke-width="1"/></svg>
<svg style="left:989px;top:333px" width="17" height="17" viewBox="0 0 17 17"><path d="M3.500 5.500H13.500M6.500 5.500V3.800H10.500V5.500" fill="none" stroke="#f0f0f0" stroke-width="1.200"/><path d="M4.500 6.500H12.500V14H4.500z" fill="none" stroke="#f0f0f0" stroke-width="1.200"/><path d="M7.200 7V13.500M9.800 7V13.500" stroke="#f0f0f0" stroke-width="1.200"/></svg>
<svg style="left:34px;top:178px" width="17" height="17" viewBox="0 0 17 17"><path d="M8.500 3.500C5 3.500 3 6 3.200 8.800S6 13.500 8.500 13.500C10.500 13.500 10 11.500 11 11S14 11 14 8.500S12 3.500 8.500 3.500z" fill="#f0f0f0"/><circle cx="6" cy="7" r="1" fill="#404040"/><circle cx="8.500" cy="5.800" r="1" fill="#404040"/><circle cx="11.200" cy="7" r="1" fill="#404040"/><circle cx="6.300" cy="10" r="1" fill="#404040"/></svg>
<svg style="left:54px;top:178px" width="17" height="17" viewBox="0 0 17 17"><path d="M7.500 3C4.500 3 2.800 5 3 7.500S5.200 11.500 7.500 11.500C9 11.500 8.800 10 9.500 9.600S12 9.500 12 7.500S10.500 3 7.500 3z" fill="#f0f0f0"/><circle cx="5.300" cy="6" r=".9" fill="#404040"/><circle cx="7.500" cy="5" r=".9" fill="#404040"/><circle cx="9.700" cy="6" r=".9" fill="#404040"/><circle cx="5.500" cy="8.600" r=".9" fill="#404040"/><rect x="9" y="10.500" width="6" height="4" fill="#f0f0f0" stroke="#404040" stroke-width=".6"/><path d="M10 12.500H14" stroke="#404040" stroke-width=".8"/></svg>
<svg style="left:31px;top:339px" width="17" height="17" viewBox="0 0 17 17"><path d="M5 3.500H9.500L12 6V13.500H5z" fill="none" stroke="#d4d4d4" stroke-width="1.100"/><path d="M9.500 3.500V6H12" fill="none" stroke="#d4d4d4" stroke-width=".9"/></svg>
<svg style="left:51px;top:339px" width="17" height="17" viewBox="0 0 17 17"><path d="M3.500 5.500H13.500M6.500 5.500V3.800H10.500V5.500" fill="none" stroke="#f0f0f0" stroke-width="1.200"/><path d="M4.500 6.500H12.500V14H4.500z" fill="none" stroke="#f0f0f0" stroke-width="1.200"/><path d="M7.200 7V13.500M9.800 7V13.500" stroke="#f0f0f0" stroke-width="1.200"/></svg>
<svg style="left:31px;top:509.5px" width="17" height="17" viewBox="0 0 17 17"><path d="M5 11H11.500a2 2 0 0 0 .3-4A3 3 0 0 0 6.200 6.300A2.400 2.400 0 0 0 5 11z" fill="#f0f0f0"/><path d="M8.500 9V14.500" stroke="#f0f0f0" stroke-width="1.400"/><path d="M8.500 8L11 11H6z" fill="#f0f0f0" stroke="#404040" stroke-width=".5"/></svg>
<svg style="left:51px;top:509.5px" width="17" height="17" viewBox="0 0 17 17"><path d="M5 3.500H9.500L12 6V13.500H5z" fill="none" stroke="#d4d4d4" stroke-width="1.100"/><path d="M9.500 3.500V6H12" fill="none" stroke="#d4d4d4" stroke-width=".9"/></svg>
<svg style="left:71px;top:509.5px" width="23" height="17" viewBox="0 0 23 17"><path d="M3.500 3.500H8L10.500 6V13.500H3.500z" fill="none" stroke="#d4d4d4" stroke-width="1.100"/><path d="M5.500 8h2v2h-2zM7.500 10h2v2h-2z" fill="#d4d4d4"/><path d="M14.500 7.500H19.500L17 10.500z" fill="#f0f0f0"/></svg>
<svg style="left:97px;top:509.5px" width="17" height="17" viewBox="0 0 17 17"><path d="M5 3.500H9.500L12 6V13.500H5z" fill="none" stroke="#d4d4d4" stroke-width="1.100"/><path d="M9.500 3.500V6H12" fill="none" stroke="#d4d4d4" stroke-width=".9"/><text x="8.500" y="12.300" text-anchor="middle" font-family="Liberation Sans, sans-serif" font-size="7" font-weight="bold" fill="#d4d4d4">S</text></svg>
</body>
</html>
